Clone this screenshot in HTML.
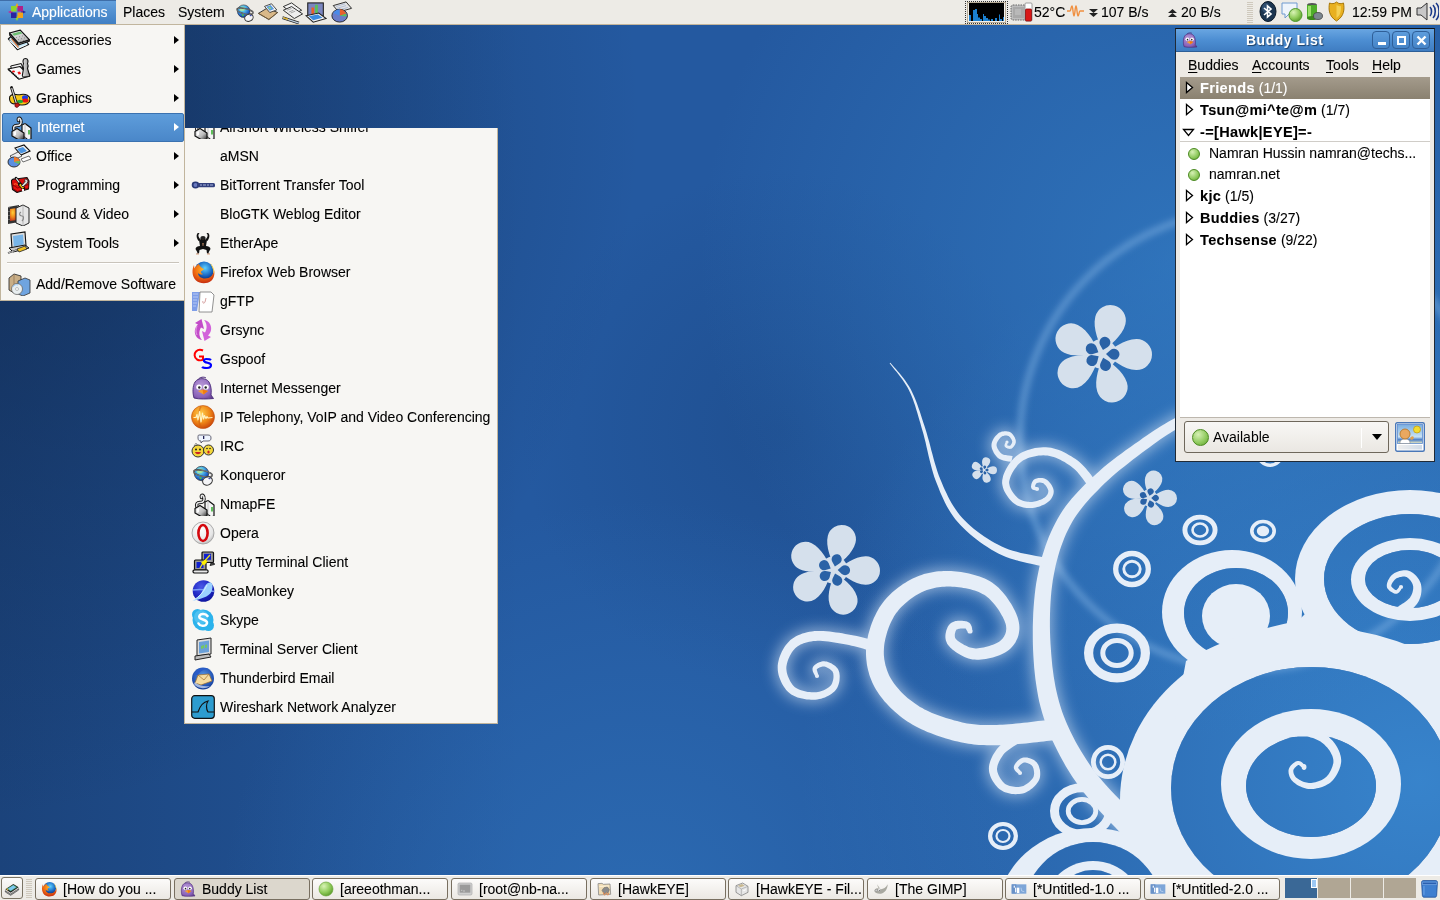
<!DOCTYPE html>
<html><head><meta charset="utf-8">
<style>
*{margin:0;padding:0;box-sizing:border-box}
html,body{width:1440px;height:900px;overflow:hidden}
body{position:relative;font-family:"Liberation Sans",sans-serif;font-size:14px;color:#000;background:#24589a}
.abs{position:absolute}
svg.ic{position:absolute}
#wall{position:absolute;left:0;top:0;width:1440px;height:900px}
#toppanel{position:absolute;left:0;top:0;width:1440px;height:25px;background:#edebe6;border-bottom:1px solid #c4b59b}
#botpanel{position:absolute;left:0;top:875px;width:1440px;height:25px;background:#edebe6;border-top:1px solid #fff}
.ptxt{position:absolute;top:3px;font-size:14px;line-height:18px;white-space:nowrap}
.menu{position:absolute;background:#f7f6f3;border:1px solid #c1b59d;overflow:hidden}
.mi{position:absolute;left:0;height:29px;width:100%;white-space:nowrap}
.mi .t{position:absolute;left:35px;top:5px;line-height:18px}
.mi .ic{left:6px;top:2px;width:24px;height:24px}
.arr{position:absolute;right:5px;top:10px;width:0;height:0;border-left:5px solid #000;border-top:4.5px solid transparent;border-bottom:4.5px solid transparent}
.sel{background:linear-gradient(#5e9ddb,#4a87c9);border:1px solid #3b72b0;border-radius:2px;color:#fff}
.sel .arr{border-left-color:#fff}
.tb{position:absolute;top:877px;height:22px;width:136px;border:1px solid #786f60;border-radius:3px;background:linear-gradient(#fcfbfa,#ebe8e3);white-space:nowrap;overflow:hidden}
.tb .t{position:absolute;left:27px;top:1px;line-height:18px}
.tb .ic{left:5px;top:2px;width:16px;height:16px}
.tb.act{background:#dcd7cd}
.bl-row{position:absolute;left:0;width:250px;height:22px;white-space:nowrap}
.bl-row .t{position:absolute;left:20px;top:2px;line-height:18px;font-size:14px}
.tbtn{width:18px;height:18px;border:1px solid #2f5f98;border-radius:4px;background:linear-gradient(#5e9ddc,#4584c8)}
.mb{top:27px;line-height:18px;white-space:nowrap}
.mb u{text-decoration:underline;text-underline-offset:2px}
.dot{position:absolute;left:8px;top:6px;width:12px;height:12px;border-radius:50%;background:radial-gradient(circle at 35% 30%,#d6f0b4,#8cc85a 60%,#5f9c2e);border:1px solid #4a8a20}
.bl-row b{font-size:14.5px;letter-spacing:0.35px}
.tb{top:2px}
.handle{background:repeating-linear-gradient(#edebe6 0 1px,#cfc9bd 1px 2px)}
.t,.ptxt,.mb,.gt{will-change:transform}
.mi .t,.ptxt,.mb,.tb .t,.bl-row .t{-webkit-text-stroke:0.1px currentColor}

</style></head><body>
<svg width="0" height="0" style="position:absolute">
<defs>
<linearGradient id="g-blue" x1="0" y1="0" x2="0" y2="1"><stop offset="0" stop-color="#7ec3f0"/><stop offset="1" stop-color="#1f6fb5"/></linearGradient>
<radialGradient id="g-ff" cx="0.4" cy="0.35" r="0.7"><stop offset="0" stop-color="#ffd23a"/><stop offset="0.5" stop-color="#f08a1c"/><stop offset="1" stop-color="#c4321a"/></radialGradient>
<radialGradient id="g-globe" cx="0.4" cy="0.35" r="0.7"><stop offset="0" stop-color="#9ad8ff"/><stop offset="0.6" stop-color="#2b6fc0"/><stop offset="1" stop-color="#10306a"/></radialGradient>
<radialGradient id="g-green" cx="0.35" cy="0.3" r="0.75"><stop offset="0" stop-color="#d9f3b5"/><stop offset="0.6" stop-color="#8fcb5a"/><stop offset="1" stop-color="#5a9a2a"/></radialGradient>
<linearGradient id="g-grey" x1="0" y1="0" x2="1" y2="1"><stop offset="0" stop-color="#fff"/><stop offset="1" stop-color="#a9a9a9"/></linearGradient>
<symbol id="i-plug" viewBox="0 0 24 24">
 <linearGradient id="gplug" x1="0" y1="0" x2="1" y2="1"><stop offset="0" stop-color="#fff"/><stop offset="0.6" stop-color="#bbb"/><stop offset="1" stop-color="#222"/></linearGradient>
 <path d="M6,15 C5,12 6,10.5 9,10.5 C12,10.5 13.5,9 13,6 C12.5,2.5 9.5,2.5 10.5,5.5" fill="none" stroke="#111" stroke-width="3.4" stroke-linecap="round"/>
 <path d="M6,15 C5,12 6,10.5 9,10.5 C12,10.5 13.5,9 13,6 C12.5,2.5 9.5,2.5 10.5,5.5" fill="none" stroke="#e8e8e8" stroke-width="1.6" stroke-linecap="round"/>
 <path d="M14,10 L17,8.5 L23,13 L23,24 L20,25 L14,20 Z" fill="#f4f4f4" stroke="#111" stroke-width="1.2" stroke-linejoin="round"/>
 <path d="M17,8.5 L17,24.5" stroke="#bbb" stroke-width="0.8"/>
 <rect x="20" y="15" width="2" height="4.5" fill="#5fbf5a"/>
 <path d="M4,16.5 L9,13.5 L16,18 L16,24 L11,25 L4,21 Z" fill="url(#gplug)" stroke="#111" stroke-width="1.2" stroke-linejoin="round"/>
 <path d="M6,17 L8,16 L8,20 L6,21Z" fill="#fff" opacity="0.9"/>
</symbol>
<symbol id="i-bt" viewBox="0 0 24 24">
 <ellipse cx="4.5" cy="12" rx="3.8" ry="3.4" fill="#2a3a78"/>
 <circle cx="4.5" cy="12" r="2" fill="#6a7ac0"/>
 <rect x="6" y="10" width="18" height="4.2" rx="1.5" fill="#33407e"/>
 <path d="M9,12h2M12,12h3M16,12h2M19,12h3" stroke="#a8b4dc" stroke-width="1"/>
</symbol>
<symbol id="i-ape" viewBox="0 0 24 24">
 <path d="M7.5,10 C6,8 5,5 6,3 C6.5,2 8,1.5 8.5,2.5 L7.5,3.5 C7,5 8,7 9.5,8.5 Z" fill="#111"/>
 <path d="M16.5,10 C18,8 19,5 18,3 C17.5,2 16,1.5 15.5,2.5 L16.5,3.5 C17,5 16,7 14.5,8.5 Z" fill="#111"/>
 <ellipse cx="12" cy="7.5" rx="2.6" ry="2.4" fill="#222"/>
 <path d="M11,8 C11.5,9 12.5,9 13,8" stroke="#a87a5a" stroke-width="0.9" fill="none"/>
 <path d="M8,9 C9,8 15,8 16,9 L15,15 C17,15 19.5,16 19.5,18 L17.5,21.5 L18.5,22.5 L16,22.5 L15.5,19 L12,18 L8.5,19 L8,22.5 L5.5,22.5 L6.5,21.5 L4.5,18 C4.5,16 7,15 9,15 Z" fill="#111"/>
 <path d="M11,12 L13,12 L12.5,15 L11.5,15Z" fill="#a87a5a" opacity="0.8"/>
 <path d="M5,23 L8,23 M16,23 L19,23" stroke="#d9a080" stroke-width="1"/>
</symbol>
<symbol id="i-ff" viewBox="0 0 24 24">
 <radialGradient id="gff1" cx="0.55" cy="0.35" r="0.6"><stop offset="0" stop-color="#5fd0ff"/><stop offset="0.6" stop-color="#1e6fc8"/><stop offset="1" stop-color="#0d2f80"/></radialGradient>
 <radialGradient id="gff2" cx="0.5" cy="0.3" r="0.8"><stop offset="0" stop-color="#ffb82a"/><stop offset="0.5" stop-color="#f06a10"/><stop offset="1" stop-color="#b81a10"/></radialGradient>
 <circle cx="13" cy="11" r="9.5" fill="url(#gff1)"/>
 <path d="M3,5 C1,9 0.5,16 5,20.5 C9,24 16,24 20,21 C23,18.5 24,14 23,10 C22.5,15 19,18.5 14,18.5 C10,18.5 7,16 7,13 C8.5,14.5 11,15 12,14 C10,13.5 9.5,12 10.5,11 C11.5,10 13,10 13,9 C11,8 8.5,6.5 8,4 C6,5 4.5,6.5 3.5,8.5 C3.2,7.5 3.2,6 3,5 Z" fill="url(#gff2)"/>
 <path d="M19,3 C22.5,6 24,11 23,14 C22.5,10 21,6 19,3Z" fill="#ffd23a"/>
</symbol>
<symbol id="i-gftp" viewBox="0 0 24 24">
 <path d="M1 3h8l-3 19h-5z" fill="#7f9ee8"/>
 <path d="M2 5h5M2 8h5M2 11h4M2 14h4M2 17h3" stroke="#c6d4f6" stroke-width="0.8"/>
 <path d="M9 3h11l3 3l-2 17h-13z" fill="#fff" stroke="#777" stroke-width="0.8"/>
 <path d="M15 9l-1 4c-1 2-3 1-2-1" fill="none" stroke="#c88" stroke-width="0.8"/>
</symbol>
<symbol id="i-grsync" viewBox="0 0 24 24">
 <path d="M10.5,1 L4,5 L7,6.5 C3.5,9.5 2.5,15 6,19.5 C7.5,21 9.5,22 11,22 C8,19 7.5,13.5 10,9.5 L13,11 Z" fill="#c34cc9"/>
 <path d="M13.5,23 L20,19 L17,17.5 C20.5,14.5 21.5,9 18,4.5 C16.5,3 14.5,2 13,2 C16,5 16.5,10.5 14,14.5 L11,13 Z" fill="#d262da"/>
 <path d="M6,8 C4.5,11 5,15 6,17" stroke="#e6a0ea" stroke-width="1.2" fill="none" opacity="0.8"/>
</symbol>
<symbol id="i-gspoof" viewBox="0 0 24 24">
 <path d="M12 3.5c-2-1-5-1-7 1c-2 2-2 6 1 8c2 1 5 1 6 0v-3h-4" fill="none" stroke="#f00" stroke-width="2"/>
 <path d="M20 13c-1-1-3-1-5-1c-2 0-3 2-1 3c2 1 6 1 6 3c0 2-2 3-4 3c-2 0-4 0-5-1" fill="none" stroke="#00f" stroke-width="2.2"/>
</symbol>
<symbol id="i-pidgin" viewBox="0 0 24 24">
 <radialGradient id="gpd" cx="0.4" cy="0.35" r="0.8"><stop offset="0" stop-color="#b89ad8"/><stop offset="0.7" stop-color="#8a62b8"/><stop offset="1" stop-color="#5c3a88"/></radialGradient>
 <path d="M3,22 C1.5,17 1.5,10 4,6 C7,1.5 15,1.5 18,6 C20.5,10 20.5,16 20,19 L22.5,22.5 C17,23 8,23.5 3,22 Z" fill="url(#gpd)" stroke="#4a2a78" stroke-width="0.9"/>
 <path d="M7,3.5 C9,1 13,0.5 15,2" stroke="#4a2a78" stroke-width="1" fill="none"/>
 <ellipse cx="8" cy="11" rx="2.8" ry="2.6" fill="#fff"/><ellipse cx="15" cy="11" rx="2.8" ry="2.6" fill="#fff"/>
 <circle cx="8.3" cy="11.5" r="1.2" fill="#222"/><circle cx="14.7" cy="11.5" r="1.2" fill="#222"/>
 <path d="M7,15 L11.5,13.5 L17,15 L12.5,18.5 Z" fill="#f6a030"/>
 <path d="M11.5,13.5 L17,15 L12.5,18.5Z" fill="#f27a10"/>
</symbol>
<symbol id="i-voip" viewBox="0 0 24 24">
 <radialGradient id="gvo" cx="0.4" cy="0.35" r="0.7"><stop offset="0" stop-color="#ffd050"/><stop offset="0.55" stop-color="#f08a18"/><stop offset="1" stop-color="#c8400a"/></radialGradient>
 <circle cx="12" cy="12" r="11.5" fill="url(#gvo)" stroke="#c05010" stroke-width="0.6"/>
 <path d="M10,1.5 C7,6 7,17 10,22.5" stroke="#d06010" stroke-width="1.5" fill="none" opacity="0.6"/>
 <path d="M2.5,12.5 L5,12.5 L6,9.5 L7,15 L8.5,6.5 L10,17 L11.5,8 L12.5,14 L13.5,10.5 L15,13.5 L16,11.5 L17,13 L21.5,12.5" fill="none" stroke="#fff2c0" stroke-width="1.2" stroke-linejoin="round"/>
</symbol>
<symbol id="i-irc" viewBox="0 0 24 24">
 <path d="M8 1h9c2 0 3 1 3 3s-1 3-3 3h-5l-2 2v-2c-2 0-3-1-3-3s0-3 1-3z" fill="#eef4ff" stroke="#445" stroke-width="0.8"/>
 <rect x="12" y="2" width="1.3" height="3" fill="#225"/>
 <path d="M5 9l2 3h-4z" fill="#eee" stroke="#555" stroke-width="0.5"/>
 <circle cx="7" cy="17" r="6" fill="#f3d73a" stroke="#333" stroke-width="1"/>
 <circle cx="17.5" cy="16" r="5" fill="#f3d73a" stroke="#333" stroke-width="1"/>
 <circle cx="5" cy="15.5" r="1" fill="#222"/><circle cx="9" cy="15.5" r="1" fill="#222"/>
 <path d="M4 18c1 3 5 3 6 0z" fill="#c22"/>
 <circle cx="16" cy="14.5" r="0.8" fill="#222"/><circle cx="19" cy="14.5" r="0.8" fill="#222"/>
 <ellipse cx="17.5" cy="18" rx="1.2" ry="1.5" fill="#c22"/>
</symbol>
<symbol id="i-konq" viewBox="0 0 24 24">
 <radialGradient id="gkq" cx="0.4" cy="0.3" r="0.75"><stop offset="0" stop-color="#b8f0b0"/><stop offset="0.35" stop-color="#50b8e8"/><stop offset="0.75" stop-color="#1e5ec8"/><stop offset="1" stop-color="#0a2a80"/></radialGradient>
 <circle cx="10.5" cy="10.5" r="7.2" fill="url(#gkq)" stroke="#222" stroke-width="0.6"/>
 <path d="M6,8 C7.5,6 11,5.5 13,7.5 C12,10 9,10.5 6.5,10 Z" fill="#a8e6a0" opacity="0.9"/>
 <path d="M8,14.5 C9,13.5 10.5,14 11,15.5 L9.5,16.5Z" fill="#4ab850"/>
 <ellipse cx="12" cy="10.5" rx="9.5" ry="3" transform="rotate(12 12 10.5)" fill="none" stroke="#333" stroke-width="1.4"/>
 <ellipse cx="12" cy="10.5" rx="9.5" ry="3" transform="rotate(12 12 10.5)" fill="none" stroke="#bbb" stroke-width="0.5"/>
 <ellipse cx="16.5" cy="18" rx="5" ry="4" transform="rotate(-25 16.5 18)" fill="#f4f4f6" stroke="#333" stroke-width="1.1"/>
 <ellipse cx="18.5" cy="15.5" rx="1.2" ry="0.8" fill="#4050b0"/>
</symbol>
<symbol id="i-opera" viewBox="0 0 24 24">
 <radialGradient id="gop" cx="0.4" cy="0.3" r="0.8"><stop offset="0" stop-color="#fff"/><stop offset="0.7" stop-color="#e6e6e6"/><stop offset="1" stop-color="#a8a8a8"/></radialGradient>
 <circle cx="12" cy="12" r="11" fill="url(#gop)" stroke="#9a9a9a" stroke-width="0.8"/>
 <ellipse cx="12" cy="12" rx="4.6" ry="8" fill="none" stroke="#d4080e" stroke-width="2.6"/>
</symbol>
<symbol id="i-putty" viewBox="0 0 24 24">
 <rect x="11" y="2" width="11.5" height="10.5" rx="1" fill="#9a9a9a" stroke="#111" stroke-width="1.2"/>
 <rect x="13" y="3.8" width="7" height="6" fill="#1020d0"/>
 <path d="M20,13 L23,13 L23.5,14.5 L19,15.5Z" fill="#555" stroke="#111" stroke-width="0.8"/>
 <rect x="3.5" y="10" width="11.5" height="10" rx="1" fill="#9a9a9a" stroke="#111" stroke-width="1.2"/>
 <rect x="5.5" y="12" width="7" height="6" fill="#1020d0"/>
 <path d="M2,21.5 C2,20 3,19.8 4,19.8 L16,19.8 C17.5,20 17.5,22.5 16,23 L4,23 C3,23 2,22.8 2,21.5Z" fill="#e8e8e8" stroke="#111" stroke-width="1.2"/>
 <path d="M19,5 L15,9.5 L12,13 L9,18" stroke="#e8e020" stroke-width="1.3"/>
 <path d="M10,12.5 L14.5,9.5 L16.5,11.5 L13,15.5 Z" fill="#fff000"/>
</symbol>
<symbol id="i-seamonkey" viewBox="0 0 24 24">
 <radialGradient id="gsm" cx="0.4" cy="0.3" r="0.8"><stop offset="0" stop-color="#4a58e8"/><stop offset="0.6" stop-color="#1c24c0"/><stop offset="1" stop-color="#0a1090"/></radialGradient>
 <circle cx="12.5" cy="12" r="10.8" fill="url(#gsm)"/>
 <path d="M2,11 C8,10 16,10.5 23,12.5" stroke="#8ab0ff" stroke-width="1.6" fill="none" opacity="0.8"/>
 <path d="M1.5,22 C6,19 10,16 12,11 C14,6 16.5,3 19.5,3.5 C22,4.5 22,9 20.5,12.5 C18,18 9,20 1.5,22Z" fill="#9ad0ff"/>
 <path d="M2,21.5 C8,18 13,13 16,6" stroke="#dff0ff" stroke-width="0.9" fill="none"/>
</symbol>
<symbol id="i-skype" viewBox="0 0 24 24">
 <circle cx="12" cy="12" r="10.5" fill="#2cb3ec"/>
 <circle cx="6.5" cy="6.5" r="5.5" fill="#2cb3ec"/><circle cx="17.5" cy="17.5" r="5.5" fill="#2cb3ec"/>
 <circle cx="10" cy="9" r="7" fill="#6fd0f6" opacity="0.5"/>
 <path d="M16.5,8 C15.5,6.5 13.5,5.8 11.5,6 C9,6.3 7.8,8 8.5,9.6 C9.5,11.6 15.5,11.5 16,14.2 C16.4,16.6 14,18 11.5,17.8 C9.5,17.7 8.2,16.8 7.5,15.5" fill="none" stroke="#fff" stroke-width="2.6" stroke-linecap="round"/>
</symbol>
<symbol id="i-tsc" viewBox="0 0 24 24">
 <path d="M6 3l14-2v16l-14 2z" fill="#ddd" stroke="#222" stroke-width="1"/>
 <path d="M8 5l10-1.5v11.5l-10 1.5z" fill="#6aa0d8"/>
 <path d="M10 9l3-1v3l-3 1zM14 8l2-.5v3l-2 .5z" fill="#7c5" opacity="0.9"/>
 <path d="M4 19l14-2l2 3l-16 3z" fill="#bbb" stroke="#222" stroke-width="1"/>
</symbol>
<symbol id="i-tbird" viewBox="0 0 24 24">
 <radialGradient id="gtb" cx="0.5" cy="0.4" r="0.7"><stop offset="0" stop-color="#5a9ae8"/><stop offset="0.7" stop-color="#1f4fb0"/><stop offset="1" stop-color="#0c2670"/></radialGradient>
 <circle cx="12" cy="12.5" r="11" fill="url(#gtb)"/>
 <path d="M4,17 L7,9 L18,8 L21,15 L10,19 Z" fill="#f6dca0" stroke="#9a6a2a" stroke-width="0.7"/>
 <path d="M7,9 L13,14 L18,8" fill="none" stroke="#a87a3a" stroke-width="0.8"/>
 <path d="M3,9 C5,3 12,0.5 18,3 C13,3 9,5 7,9 Z" fill="#2a5cc8"/>
 <path d="M3,18 C6,22 13,24 19,20 C14,21 8,20 4,16 Z" fill="#d8e4f8" opacity="0.7"/>
</symbol>
<symbol id="i-wshark" viewBox="0 0 24 24">
 <rect x="0.7" y="0.7" width="22.6" height="22.6" rx="3" fill="#2d9ccf" stroke="#111" stroke-width="1.2"/>
 <path d="M1 17h6c2-6 5-10 10-11c-2 3-2 8 0 11h6" fill="none" stroke="#111" stroke-width="1.2"/>
</symbol>
</defs></svg>
<svg width="0" height="0" style="position:absolute">
<defs>
<symbol id="i-acc" viewBox="0 0 24 24">
 <linearGradient id="gcalc" x1="0" y1="0" x2="0.6" y2="1"><stop offset="0" stop-color="#f4f4f4"/><stop offset="1" stop-color="#b4b4b4"/></linearGradient>
 <path d="M1.3,11 L10.3,21.7 L21.7,16.5 L19,13 L4,8.5 Z" fill="#c4e8f8" stroke="#111" stroke-width="1.1" stroke-linejoin="round"/>
 <path d="M2.5,12.5 L10.5,20.5 L20,16.5" fill="none" stroke="#fff" stroke-width="0.9"/>
 <path d="M4.5,10.5 L11.5,19.5" stroke="#e0804a" stroke-width="1.3"/>
 <path d="M2.5,5 L2.8,7.5 L11.3,17 L22.3,13.3 L22.3,11.7 L11.3,15.2 Z" fill="#9a9a9a" stroke="#111" stroke-width="1.1" stroke-linejoin="round"/>
 <path d="M2.5,5 L13.3,2.2 L22.3,11.7 L11.3,15.2 Z" fill="url(#gcalc)" stroke="#111" stroke-width="1.2" stroke-linejoin="round"/>
 <path d="M5,5.7 L13.5,3.6 L15.2,5.5 L7,7.8 Z" fill="#6cbf72"/>
 <path d="M9,9.5h.8M12,8.7h.8M15,7.9h.8M11,11.5h.8M14,10.7h.8M17,9.9h.8M13,13.3h.8M16,12.5h.8" stroke="#777" stroke-width="0.9"/>
</symbol>
<symbol id="i-games" viewBox="0 0 24 24">
 <linearGradient id="gpawn" x1="0" y1="0" x2="1" y2="0"><stop offset="0" stop-color="#e8e8e8"/><stop offset="1" stop-color="#8a8a8a"/></linearGradient>
 <path d="M3.7,9 L14.3,6.5 L16,12 L5,14.5 Z" fill="#f2f2f2" stroke="#111" stroke-width="1"/>
 <path d="M1,12 L12,22.3 L22.7,19 L13,9.5 Z" fill="#f8f8f8" stroke="#111" stroke-width="1.1" stroke-linejoin="round"/>
 <path d="M1.5,12.5 L12,22" stroke="#111" stroke-width="1.6" stroke-dasharray="1 1"/>
 <ellipse cx="6.5" cy="14.5" rx="1.5" ry="1.1" fill="#f01010"/>
 <path d="M10.5,15 L13,14.5 L14,17 L11.5,17.5Z" fill="#f01010"/>
 <path d="M18.5,1.5 C16,1.5 15.5,4.5 16.5,6.5 C15.5,8 16,10 16.5,11.5 L15.5,17.5 C15,18.5 15.5,20 17,20 L22,19.5 C23,19 23,17.5 22,16.5 L20.5,11.5 C21,10 21.5,8 20.5,6.5 C21.5,4.5 21,1.5 18.5,1.5 Z" fill="url(#gpawn)" stroke="#111" stroke-width="1.1"/>
</symbol>
<symbol id="i-graphics" viewBox="0 0 24 24">
 <path d="M2.5,13 C2,9.5 5,8 9,8.5 C11,8.8 12,9 14,8.5 C19,7.5 23,10 23,13.5 C23,17 19,19.5 14,19 C11,18.8 10,17.5 7.5,17.8 C4.5,18.2 2.8,16 2.5,13 Z" fill="#f6c818" stroke="#111" stroke-width="1.1"/>
 <path d="M4,11 C5,10 6,10 7,11" stroke="#fff4a0" stroke-width="1" fill="none"/>
 <ellipse cx="18" cy="11.5" rx="3" ry="2.2" fill="#1a3ae8"/>
 <ellipse cx="18.3" cy="14.5" rx="3.3" ry="2" fill="#e81414"/>
 <ellipse cx="13" cy="15.5" rx="3" ry="1.7" fill="#1ea838"/>
 <path d="M4.5,1.5 L9.5,18" stroke="#111" stroke-width="2.8" stroke-linecap="round"/>
 <path d="M4.7,2 L9.4,17.5" stroke="#d8d8d8" stroke-width="1.1"/>
 <path d="M8,17.5 L11.5,17 L12.5,19.5 L10,21.5 L8,20.5 Z" fill="#c81818" stroke="#5a0a0a" stroke-width="0.8"/>
</symbol>
<symbol id="i-office" viewBox="0 0 24 24">
 <path d="M8 4l9-3l6 6l-9 4z" fill="#f4f4f4" stroke="#111" stroke-width="1.1"/>
 <path d="M10 5l6-2l4 4l-6 2.5z" fill="#4b94e0"/>
 <path d="M3 12l8-4l4 4l-8 4z" fill="#eee" stroke="#333" stroke-width="0.8"/>
 <path d="M14 15l8-3l2 3l-8 3z" fill="#fff" stroke="#333" stroke-width="0.7"/>
 <ellipse cx="7" cy="18" rx="6" ry="5" fill="#5b8ee0" stroke="#222" stroke-width="0.9"/>
 <path d="M7 18v-5c3 0 5 2 6 4z" fill="#f07a2a"/>
 <path d="M7 18l6-1c0 1 0 2-1 3z" fill="#6ac050"/>
</symbol>
<symbol id="i-prog" viewBox="0 0 24 24">
 <path d="M4.5,9 C4,7 6,5.5 8.5,6 L20,4.5 L22,8 L21.5,16 L10,19.5 L5.5,16.5 Z" fill="#d80c0c" stroke="#111" stroke-width="1.1" stroke-linejoin="round"/>
 <path d="M6,15.5 L10.5,18.5 L21.5,15 L21.5,11.5 L10.5,15 L6,12 Z" fill="#e81010" stroke="#5a0000" stroke-width="0.6"/>
 <path d="M7,11.5 C8,10.5 10,11 11,12" stroke="#ff6a2a" stroke-width="1.2" fill="none"/>
 <path d="M9,5 L13.5,11" stroke="#111" stroke-width="2.6" stroke-linecap="round"/>
 <path d="M9.2,5.3 L13.3,10.8" stroke="#e8e8e8" stroke-width="1.1"/>
 <path d="M12.5,11 L16.5,15.5" stroke="#111" stroke-width="3.4" stroke-linecap="round"/>
 <path d="M12.8,11.3 L16.2,15.2" stroke="#f0c010" stroke-width="2"/>
 <path d="M18.5,6 C20.5,6 21.5,8 20.5,10 L16,14 L14.5,12.5 L18,8.5 C17.5,7.5 17.5,6.5 18.5,6 Z" fill="#d8d8d8" stroke="#222" stroke-width="0.9"/>
 <rect x="15" y="16" width="2" height="2.5" fill="#f4f4f4"/>
</symbol>
<symbol id="i-sound" viewBox="0 0 24 24">
 <path d="M1 5l11-2v17l-11 2z" fill="#333"/>
 <path d="M3 7l7-1v12l-7 1z" fill="url(#g-ff)"/>
 <path d="M2 5.5v.5M2 9v.5M2 13v.5M2 17v.5M11 4v.5M11 8v.5M11 12v.5M11 16v.5" stroke="#fff" stroke-width="1"/>
 <path d="M9 6l7-3l6 3v15l-6 3l-7-3z" fill="#e6e6e6" stroke="#222" stroke-width="1"/>
 <path d="M16 3v21" stroke="#999" stroke-width="0.6"/>
 <path d="M14 10c-2 1-2 4 1 4c2 0 2 3 0 5" fill="none" stroke="#888" stroke-width="1.2"/>
</symbol>
<symbol id="i-systools" viewBox="0 0 24 24">
 <path d="M4 3l14-2l1 14l-14 3z" fill="#dcdcdc" stroke="#111" stroke-width="1.1"/>
 <path d="M6 5l10-1.5l.8 10l-10 2z" fill="#78b5e8"/>
 <path d="M2 17l16-3l4 3l-16 4z" fill="#c8c8c8" stroke="#111" stroke-width="1"/>
 <path d="M1 22l9-3" stroke="#222" stroke-width="1.8"/>
 <path d="M1 22l9-3" stroke="#ddd" stroke-width="0.8"/>
 <path d="M10 18l8-3l2 3l-8 3z" fill="#f0c020" stroke="#222" stroke-width="0.8"/>
</symbol>
<symbol id="i-addrem" viewBox="0 0 24 24">
 <path d="M2 6l5-4l7 2v14l-7 3l-5-3z" fill="#c9ae86" stroke="#333" stroke-width="0.9"/>
 <path d="M7 2v19" stroke="#8a7050" stroke-width="0.7"/>
 <path d="M11 9l7-3l5 2v13l-7 3l-5-2z" fill="#6fa4e0" stroke="#333" stroke-width="0.8"/>
 <circle cx="10" cy="17" r="5.5" fill="#e8eef0" stroke="#666" stroke-width="0.8"/>
 <circle cx="10" cy="17" r="1.5" fill="#fff" stroke="#888" stroke-width="0.5"/>
 <path d="M6 15c1-2 3-3 5-2" stroke="#9cf" stroke-width="1" fill="none"/>
</symbol>
<symbol id="i-fedora" viewBox="0 0 20 20">
 <path d="M10 1l2 4l-2 1l-2-1z" fill="#f6a21a"/>
 <path d="M10 19l2-4l-2-1l-2 1z" fill="#8ed62a"/>
 <path d="M1 10l4-2l1 2l-1 2z" fill="#c22a9a"/>
 <path d="M19 10l-4-2l-1 2l1 2z" fill="#2b2aa0"/>
 <rect x="4" y="4" width="5.5" height="5.5" fill="#8ed62a"/>
 <rect x="10.5" y="4" width="5.5" height="5.5" fill="#b0208a"/>
 <rect x="4" y="10.5" width="5.5" height="5.5" fill="#2a24a0"/>
 <rect x="10.5" y="10.5" width="5.5" height="5.5" fill="#f6a21a"/>
</symbol>
</defs></svg>
<svg width="0" height="0" style="position:absolute">
<defs>
<symbol id="i-desk" viewBox="0 0 24 24">
 <path d="M2 14l12-8l8 5l-12 8z" fill="#222"/>
 <path d="M4 13l10-6l6 4l-10 6z" fill="#4b9a6a"/>
 <path d="M6 13l8-5l4 3l-8 5z" fill="#7cc8f0"/>
 <path d="M2 16l8 5l12-8v2l-12 8l-8-5z" fill="#aaa" stroke="#222" stroke-width="0.8"/>
 <path d="M3 12l4 2l-2 2z" fill="#d4b040"/>
</symbol>
<symbol id="i-grn" viewBox="0 0 24 24">
 <circle cx="12" cy="12" r="10.5" fill="url(#g-green)" stroke="#6aa53a" stroke-width="1"/>
</symbol>
<symbol id="i-term" viewBox="0 0 24 24">
 <rect x="1.5" y="3" width="21" height="18" rx="2" fill="#cfcfcf" stroke="#aaa" stroke-width="1"/>
 <rect x="4" y="5.5" width="16" height="12" fill="#9a9a9a"/>
 <path d="M6 14h2M9 15h3" stroke="#ddd" stroke-width="1"/>
</symbol>
<symbol id="i-hawk" viewBox="0 0 24 24">
 <path d="M3,4 L9,3.5 L11,5 L21,4.5 L22,20 L4,21 Z" fill="#f0dcb4" stroke="#888" stroke-width="1.2" stroke-linejoin="round"/>
 <path d="M5,8 L20,7.5" stroke="#fff4dc" stroke-width="1.5"/>
 <path d="M12,10 L17,9 L20,13 L18,18 L12,19 L9,14 Z" fill="#8a8a8a" stroke="#666" stroke-width="0.8"/>
 <path d="M11,17 C11,22 14,22 14,18 M16,17 C16,22 19,22 19,18" stroke="#e0905a" stroke-width="1.6" fill="none"/>
</symbol>
<symbol id="i-fm" viewBox="0 0 24 24">
 <path d="M3,7 L13,3 L21,8 L21,17 L11,22 L3,17 Z" fill="#e6e6e6" stroke="#7a7a7a" stroke-width="1.1" stroke-linejoin="round"/>
 <path d="M3,7 L11,12 L21,8 M11,12 L11,22" fill="none" stroke="#999" stroke-width="0.9"/>
 <path d="M6,7 L12,4.5 L16,7 L10,9.5 Z" fill="#c8b890"/>
 <rect x="14" y="13" width="4" height="1.5" fill="#fff" transform="rotate(-25 16 14)"/>
</symbol>
<symbol id="i-gimp" viewBox="0 0 24 24">
 <path d="M2,15 C3,11 7,10 10,12 C14,13 19,11 22,5 C22,12 18,18 12,19 C7,19.5 3,18 2,15 Z" fill="#a8a8a0"/>
 <path d="M8,11 L6,5 L10,10 Z" fill="#b8b8b0"/>
 <circle cx="5" cy="14" r="1.8" fill="#ccc" stroke="#777" stroke-width="0.5"/>
 <circle cx="9.5" cy="13.5" r="2" fill="#fff" stroke="#888" stroke-width="0.5"/>
 <circle cx="10" cy="13.8" r="0.8" fill="#333"/>
</symbol>
<symbol id="i-img" viewBox="0 0 24 24">
 <rect x="1" y="5" width="22" height="14" fill="#7ea6d8"/>
 <rect x="1" y="5" width="7" height="14" fill="#6a92c8"/>
 <rect x="4" y="7" width="2" height="3" fill="#e8eef8"/>
 <rect x="6" y="10" width="2" height="7" fill="#f0f4fa"/>
 <rect x="9" y="10" width="3.5" height="8" fill="#fff"/>
 <path d="M15,10 L16,15 L20,16" stroke="#c8dcf4" stroke-width="1" fill="none"/>
</symbol>
<symbol id="i-trash" viewBox="0 0 24 24">
 <path d="M2 4c0-1 1-2 2-2h16c1 0 2 1 2 2l-1 17c0 1-1 2-2 2h-14c-1 0-2-1-2-2z" fill="#3f7fd0" stroke="#1f4f98" stroke-width="1"/>
 <path d="M3 4h18v3h-18z" fill="#2a5fb0" stroke="#8ab8f0" stroke-width="0.7"/>
 <path d="M5 9v11" stroke="#7ab0f0" stroke-width="1"/>
</symbol>
</defs></svg>
<svg width="0" height="0" style="position:absolute">
<defs>
<symbol id="i-mail" viewBox="0 0 24 24">
 <path d="M1 13l10-6l12 5l-10 8z" fill="#d9b888" stroke="#222" stroke-width="1"/>
 <path d="M8 5l8-3l6 7l-8 3z" fill="#f5f5f5" stroke="#222" stroke-width="0.9"/>
 <path d="M10 5.5l5-2l4 4.5l-5 2z" fill="#5a9ae0"/>
 <path d="M12 6l2-.8l2 2.2l-2 .8z" fill="#8fd080"/>
 <path d="M1 13l12 7l10-8" fill="none" stroke="#8a6a3a" stroke-width="0.8"/>
</symbol>
<symbol id="i-writer" viewBox="0 0 24 24">
 <path d="M2 5l9-4l11 8l-9 4z" fill="#f4f4f4" stroke="#222" stroke-width="1"/>
 <path d="M2 9l9-4l12 8l-9 5z" fill="#eee" stroke="#222" stroke-width="1"/>
 <path d="M6 9l5-2M8 11l5-2M10 12l5-2" stroke="#999" stroke-width="0.9"/>
 <path d="M1 17l18 6" stroke="#222" stroke-width="3"/>
 <path d="M1 17l18 6" stroke="#bcd" stroke-width="1.5"/>
 <path d="M2 17l5 2" stroke="#e0b020" stroke-width="1.5"/>
</symbol>
<symbol id="i-impress" viewBox="0 0 24 24">
 <rect x="3" y="1" width="17" height="14" fill="#7b86c0" stroke="#222" stroke-width="1.2"/>
 <rect x="7" y="6" width="3" height="7" fill="#e8602a"/>
 <rect x="11" y="3" width="3" height="10" fill="#5ac05a"/>
 <path d="M1 15l14-3l8 6l-14 4z" fill="#f2f2f2" stroke="#222" stroke-width="1.1"/>
 <path d="M4 15.5l10-2l5 3.8l-10 2.6z" fill="#3a8ae0"/>
</symbol>
<symbol id="i-calc" viewBox="0 0 24 24">
 <path d="M3 5l14-4l6 7l-14 4z" fill="#e4e4e4" stroke="#222" stroke-width="1"/>
 <path d="M6 6l10-3M7 8l10-3M9 10l10-3" stroke="#a0b0d0" stroke-width="0.8"/>
 <ellipse cx="10" cy="16" rx="8.5" ry="7" fill="#6a7cc8" stroke="#222" stroke-width="1"/>
 <path d="M10 16v-7c3 0 6 2 7 5z" fill="#e8602a"/>
 <path d="M10 16l7-2c.5 1 .5 2 0 3z" fill="#5ac05a"/>
 <path d="M3 13c2-3 5-4 7-4v7z" fill="#4a8ae8"/>
</symbol>
</defs></svg>

<svg id="wall" width="1440" height="900" viewBox="0 0 1440 900">
<defs>
<linearGradient id="wbg" x1="0" y1="0" x2="1" y2="0.6">
<stop offset="0" stop-color="#17335f"/><stop offset="0.45" stop-color="#22528f"/><stop offset="1" stop-color="#2c6cb2"/></linearGradient>
<radialGradient id="wlite" cx="1420" cy="780" r="620" gradientUnits="userSpaceOnUse"><stop offset="0" stop-color="#3b8bd3" stop-opacity="0.85"/><stop offset="1" stop-color="#3b8bd3" stop-opacity="0"/></radialGradient>
<radialGradient id="wdark" cx="-60" cy="120" r="700" gradientUnits="userSpaceOnUse"><stop offset="0" stop-color="#10284e" stop-opacity="0.8"/><stop offset="0.5" stop-color="#10284e" stop-opacity="0.35"/><stop offset="1" stop-color="#10284e" stop-opacity="0"/></radialGradient><linearGradient id="wleft" x1="0" y1="0" x2="520" y2="0" gradientUnits="userSpaceOnUse"><stop offset="0" stop-color="#10284e" stop-opacity="0.45"/><stop offset="1" stop-color="#10284e" stop-opacity="0"/></linearGradient>
<radialGradient id="wlite2" cx="1180" cy="260" r="480" gradientUnits="userSpaceOnUse"><stop offset="0" stop-color="#3684cc" stop-opacity="0.6"/><stop offset="1" stop-color="#3684cc" stop-opacity="0"/></radialGradient>
<radialGradient id="wblob" cx="780" cy="430" r="260" gradientUnits="userSpaceOnUse"><stop offset="0" stop-color="#1a4580" stop-opacity="0.45"/><stop offset="1" stop-color="#1a4580" stop-opacity="0"/></radialGradient>
<radialGradient id="wlite3" cx="640" cy="920" r="420" gradientUnits="userSpaceOnUse"><stop offset="0" stop-color="#3278c0" stop-opacity="0.55"/><stop offset="1" stop-color="#3278c0" stop-opacity="0"/></radialGradient>
<filter id="glow" x="-20%" y="-20%" width="140%" height="140%"><feGaussianBlur stdDeviation="7"/></filter>
<filter id="soft2" x="-20%" y="-20%" width="140%" height="140%"><feGaussianBlur stdDeviation="3"/></filter>
<filter id="soft" x="-20%" y="-20%" width="140%" height="140%"><feGaussianBlur stdDeviation="7"/></filter>
</defs>
<g id="bgg">
<rect width="1440" height="900" fill="#2459a0"/>
<rect width="1440" height="900" fill="url(#wleft)"/>
<rect width="1440" height="900" fill="url(#wdark)"/>
<rect width="1440" height="900" fill="url(#wblob)"/>
<rect width="1440" height="900" fill="url(#wlite)"/>
<rect width="1440" height="900" fill="url(#wlite2)"/>
<rect width="1440" height="900" fill="url(#wlite3)"/>
<circle cx="1250" cy="440" r="230" fill="none" stroke="#8fbce8" stroke-opacity="0.45" stroke-width="7" filter="url(#soft2)"/>
</g>
<g fill="#dbe8f8" opacity="0.55" filter="url(#glow)" stroke="#dbe8f8" stroke-width="6"><path d="M1182.4,413.7 L1180.8,414.7 L1178.8,415.8 L1176.5,417.2 L1173.9,418.7 L1171.0,420.3 L1167.9,422.1 L1164.7,424.0 L1161.2,426.1 L1157.7,428.3 L1154.1,430.6 L1150.4,433.0 L1146.8,435.5 L1143.0,438.1 L1139.1,440.9 L1134.9,443.8 L1130.5,446.9 L1126.0,450.1 L1121.5,453.4 L1116.9,456.8 L1112.4,460.3 L1107.9,463.8 L1103.6,467.3 L1099.5,470.9 L1095.6,474.4 L1092.0,477.8 L1088.4,481.1 L1084.9,484.5 L1081.5,487.9 L1078.2,491.4 L1075.0,494.9 L1071.8,498.6 L1068.8,502.3 L1065.8,506.1 L1063.0,510.1 L1060.3,514.3 L1057.8,518.5 L1055.4,523.0 L1053.1,527.4 L1051.0,532.0 L1048.9,536.7 L1047.1,541.5 L1045.3,546.4 L1043.7,551.4 L1042.1,556.4 L1040.7,561.6 L1039.4,566.9 L1038.3,572.2 L1037.2,577.7 L1036.2,583.3 L1035.4,589.1 L1034.7,595.1 L1034.1,601.2 L1033.6,607.4 L1033.2,613.7 L1033.0,620.0 L1032.8,626.2 L1032.8,632.4 L1032.8,638.6 L1032.9,644.6 L1033.1,650.5 L1033.4,656.3 L1033.8,662.0 L1034.2,667.7 L1034.8,673.4 L1035.4,679.0 L1036.2,684.6 L1037.1,690.3 L1038.1,695.9 L1039.2,701.4 L1040.6,707.0 L1042.1,712.6 L1043.8,718.1 L1045.6,723.6 L1047.7,729.1 L1049.8,734.5 L1052.2,739.9 L1054.7,745.3 L1057.3,750.6 L1060.0,755.8 L1062.9,761.0 L1065.8,766.2 L1068.9,771.2 L1072.0,776.2 L1075.3,781.1 L1078.8,786.1 L1082.6,791.1 L1086.6,796.1 L1090.7,801.0 L1095.0,805.8 L1099.2,810.5 L1103.4,815.0 L1107.5,819.4 L1111.5,823.5 L1115.2,827.3 L1118.7,830.9 L1121.8,834.2 L1124.9,837.3 L1127.9,840.2 L1130.8,842.8 L1133.5,845.3 L1136.1,847.5 L1138.5,849.5 L1140.8,851.3 L1142.8,852.8 L1144.6,854.2 L1146.1,855.4 L1147.4,856.4 L1148.4,857.3 L1163.6,838.7 L1162.2,837.6 L1160.7,836.4 L1159.0,835.2 L1157.2,833.9 L1155.3,832.5 L1153.2,830.9 L1151.0,829.2 L1148.7,827.3 L1146.3,825.3 L1143.7,823.0 L1141.0,820.6 L1138.2,817.8 L1135.0,814.7 L1131.4,811.2 L1127.6,807.5 L1123.7,803.6 L1119.6,799.5 L1115.4,795.3 L1111.3,790.9 L1107.2,786.5 L1103.2,782.0 L1099.5,777.6 L1095.9,773.2 L1092.7,768.9 L1089.6,764.5 L1086.6,759.9 L1083.6,755.3 L1080.8,750.7 L1078.0,745.9 L1075.3,741.2 L1072.8,736.3 L1070.4,731.5 L1068.1,726.6 L1066.0,721.7 L1064.0,716.8 L1062.2,711.9 L1060.6,707.0 L1059.1,702.0 L1057.8,697.0 L1056.6,692.0 L1055.5,686.9 L1054.6,681.7 L1053.7,676.5 L1053.0,671.2 L1052.3,665.9 L1051.8,660.5 L1051.3,655.0 L1050.9,649.5 L1050.5,643.9 L1050.2,638.1 L1050.0,632.2 L1049.9,626.3 L1049.9,620.3 L1050.0,614.3 L1050.2,608.4 L1050.5,602.5 L1050.9,596.7 L1051.4,591.0 L1052.1,585.6 L1052.8,580.3 L1053.7,575.2 L1054.7,570.2 L1055.7,565.3 L1056.9,560.5 L1058.2,555.7 L1059.6,551.1 L1061.1,546.6 L1062.7,542.2 L1064.4,537.8 L1066.2,533.6 L1068.2,529.5 L1070.2,525.5 L1072.4,521.6 L1074.7,517.8 L1077.1,514.2 L1079.7,510.7 L1082.4,507.2 L1085.2,503.8 L1088.1,500.4 L1091.1,497.1 L1094.3,493.8 L1097.6,490.4 L1100.9,487.0 L1104.4,483.6 L1108.0,480.3 L1111.8,476.8 L1115.8,473.3 L1120.0,469.8 L1124.3,466.4 L1128.7,462.9 L1133.0,459.6 L1137.4,456.3 L1141.6,453.1 L1145.7,450.1 L1149.6,447.2 L1153.2,444.5 L1156.7,442.0 L1160.1,439.6 L1163.5,437.3 L1166.9,435.1 L1170.2,433.0 L1173.3,431.0 L1176.3,429.2 L1179.1,427.5 L1181.6,425.9 L1183.9,424.5 L1186.0,423.3 L1187.6,422.3Z M1143.4,848.0 a12.6,12.6 0 1,0 25.2,0 a12.6,12.6 0 1,0 -25.2,0Z"/><path d="M1050.9,719.6 L1049.0,719.8 L1046.7,720.0 L1044.1,720.4 L1041.2,720.7 L1038.0,721.1 L1034.6,721.5 L1031.0,722.0 L1027.4,722.4 L1023.6,722.8 L1019.9,723.2 L1016.2,723.6 L1012.5,724.0 L1009.0,724.3 L1005.7,724.5 L1002.6,724.7 L999.7,724.8 L997.0,724.9 L994.3,725.0 L991.8,725.0 L989.3,725.1 L986.9,725.1 L984.6,725.0 L982.4,725.0 L980.2,724.9 L978.0,724.7 L975.8,724.6 L973.7,724.3 L971.5,724.1 L969.3,723.7 L967.0,723.4 L964.7,722.9 L962.2,722.4 L959.7,721.8 L957.0,721.1 L954.3,720.4 L951.5,719.6 L948.7,718.8 L945.9,717.9 L943.1,717.0 L940.2,716.1 L937.4,715.0 L934.7,714.0 L932.0,712.9 L929.4,711.8 L926.9,710.6 L924.5,709.4 L922.2,708.1 L920.0,706.9 L917.9,705.5 L915.7,704.1 L913.6,702.6 L911.6,701.1 L909.5,699.5 L907.5,697.9 L905.6,696.2 L903.7,694.5 L901.9,692.7 L900.2,690.9 L898.6,689.1 L897.0,687.3 L895.6,685.5 L894.2,683.8 L893.0,682.0 L891.9,680.2 L890.8,678.5 L889.8,676.7 L888.9,674.9 L888.1,673.0 L887.3,671.1 L886.7,669.2 L886.1,667.3 L885.5,665.4 L885.1,663.4 L884.7,661.5 L884.3,659.5 L884.1,657.5 L883.9,655.5 L883.8,653.5 L883.8,651.5 L883.9,649.5 L884.0,647.5 L884.2,645.3 L884.5,643.1 L884.9,640.9 L885.4,638.6 L886.0,636.2 L886.6,633.9 L887.3,631.5 L888.1,629.2 L888.9,626.9 L889.8,624.7 L890.8,622.5 L891.8,620.4 L892.9,618.4 L893.9,616.5 L895.0,614.7 L896.2,613.1 L897.5,611.4 L898.8,609.7 L900.3,608.1 L901.8,606.5 L903.5,604.9 L905.1,603.4 L906.9,601.9 L908.6,600.4 L910.5,599.1 L912.3,597.8 L914.1,596.5 L916.0,595.3 L917.9,594.2 L919.7,593.2 L921.5,592.3 L923.2,591.5 L925.0,590.7 L926.8,590.1 L928.7,589.4 L930.6,588.9 L932.5,588.4 L934.4,587.9 L936.3,587.6 L938.3,587.2 L940.3,587.0 L942.3,586.8 L944.3,586.7 L946.3,586.6 L948.4,586.6 L950.4,586.6 L952.5,586.7 L954.6,586.8 L956.8,587.0 L959.0,587.3 L961.3,587.6 L963.6,587.9 L965.9,588.3 L968.1,588.8 L970.4,589.3 L972.6,589.9 L974.7,590.6 L976.8,591.3 L978.8,592.1 L980.7,593.0 L982.5,593.9 L984.2,594.8 L985.7,595.8 L987.2,597.0 L988.8,598.3 L990.3,599.8 L991.9,601.5 L993.5,603.2 L995.0,605.1 L996.5,607.1 L998.0,609.1 L999.3,611.1 L1000.6,613.2 L1001.7,615.2 L1002.8,617.1 L1003.7,619.0 L1004.5,620.8 L1005.1,622.4 L1005.6,623.8 L1005.9,625.0 L1006.1,626.2 L1006.2,627.4 L1006.3,628.5 L1006.2,629.7 L1006.1,630.8 L1005.9,631.9 L1005.6,632.9 L1005.3,634.0 L1004.8,635.0 L1004.3,635.9 L1003.8,636.9 L1003.1,637.8 L1002.5,638.7 L1001.7,639.5 L1000.9,640.2 L1000.1,640.9 L999.1,641.7 L997.8,642.4 L996.3,643.2 L994.7,643.9 L993.0,644.7 L991.2,645.3 L989.3,646.0 L987.4,646.5 L985.5,647.0 L983.6,647.5 L981.7,647.8 L979.9,648.1 L978.2,648.3 L976.7,648.4 L975.3,648.4 L974.1,648.3 L972.8,648.1 L971.4,647.8 L970.0,647.4 L968.5,646.9 L967.1,646.3 L965.6,645.6 L964.2,644.9 L962.8,644.1 L961.4,643.3 L960.2,642.5 L959.1,641.7 L958.0,640.9 L957.1,640.2 L956.4,639.5 L955.9,638.9 L955.6,638.6 L955.3,638.2 L955.1,637.8 L955.0,637.3 L954.9,636.7 L954.8,636.0 L954.8,635.3 L954.8,634.5 L954.9,633.8 L955.1,633.0 L955.3,632.3 L955.5,631.6 L955.7,631.0 L956.0,630.5 L956.2,630.0 L956.3,629.8 L956.2,629.8 L956.3,629.7 L956.6,629.6 L957.0,629.4 L957.5,629.2 L958.2,629.0 L958.9,628.8 L959.7,628.7 L960.5,628.5 L961.3,628.5 L962.1,628.4 L962.9,628.4 L963.6,628.4 L964.3,628.4 L964.8,628.4 L965.1,628.4 L965.1,628.4 L965.1,628.3 L965.1,628.3 L965.2,628.3 L965.4,628.4 L965.5,628.6 L965.7,628.8 L966.0,629.1 L966.2,629.5 L966.4,629.8 L966.6,630.2 L966.9,630.6 L967.1,631.0 L967.4,631.4 L967.7,631.8 L968.2,632.0 L971.8,630.0 L972.0,629.7 L972.1,629.6 L972.1,629.3 L972.1,628.9 L972.1,628.4 L972.0,627.8 L971.8,627.3 L971.7,626.6 L971.4,626.0 L971.1,625.3 L970.7,624.6 L970.2,623.8 L969.6,623.1 L968.8,622.5 L967.9,622.0 L966.9,621.6 L966.0,621.3 L965.2,621.2 L964.3,621.0 L963.3,620.9 L962.3,620.8 L961.2,620.7 L960.1,620.7 L959.0,620.7 L957.8,620.8 L956.6,620.9 L955.5,621.1 L954.3,621.4 L953.1,621.9 L951.9,622.4 L950.7,623.2 L949.7,624.2 L949.0,625.1 L948.3,626.1 L947.7,627.1 L947.2,628.2 L946.7,629.4 L946.3,630.6 L946.0,631.9 L945.7,633.2 L945.5,634.6 L945.4,636.0 L945.4,637.5 L945.6,639.0 L945.9,640.6 L946.5,642.1 L947.2,643.7 L948.1,645.1 L949.2,646.3 L950.2,647.4 L951.4,648.5 L952.7,649.7 L954.2,650.8 L955.7,651.9 L957.3,653.0 L959.0,654.1 L960.7,655.1 L962.6,656.0 L964.5,656.9 L966.4,657.7 L968.4,658.4 L970.5,658.9 L972.5,659.4 L974.7,659.6 L976.8,659.7 L978.9,659.7 L981.1,659.5 L983.4,659.3 L985.7,658.9 L988.0,658.5 L990.3,658.0 L992.7,657.4 L995.0,656.7 L997.2,656.0 L999.4,655.2 L1001.6,654.3 L1003.6,653.3 L1005.5,652.2 L1007.4,651.0 L1009.1,649.8 L1010.5,648.4 L1011.9,647.0 L1013.2,645.6 L1014.3,644.0 L1015.4,642.4 L1016.3,640.6 L1017.2,638.8 L1017.9,637.0 L1018.5,635.0 L1018.9,633.0 L1019.2,631.0 L1019.4,628.9 L1019.4,626.8 L1019.2,624.6 L1018.9,622.4 L1018.4,620.2 L1017.8,618.1 L1017.0,615.8 L1016.1,613.5 L1015.0,611.1 L1013.8,608.7 L1012.5,606.3 L1011.1,603.8 L1009.5,601.4 L1007.9,599.0 L1006.2,596.6 L1004.4,594.3 L1002.5,592.0 L1000.6,589.9 L998.6,587.8 L996.5,585.9 L994.3,584.2 L992.0,582.6 L989.6,581.1 L987.2,579.8 L984.7,578.6 L982.1,577.5 L979.5,576.6 L976.9,575.7 L974.3,574.9 L971.6,574.2 L968.9,573.6 L966.3,573.0 L963.6,572.6 L961.0,572.1 L958.5,571.8 L956.0,571.5 L953.5,571.3 L951.1,571.1 L948.6,571.0 L946.2,571.0 L943.7,571.1 L941.2,571.2 L938.7,571.3 L936.3,571.6 L933.8,571.9 L931.3,572.4 L928.9,572.9 L926.4,573.4 L924.0,574.1 L921.6,574.9 L919.2,575.7 L916.8,576.7 L914.5,577.7 L912.2,578.8 L909.9,580.0 L907.6,581.3 L905.4,582.7 L903.1,584.1 L900.8,585.7 L898.6,587.3 L896.4,589.0 L894.2,590.8 L892.1,592.6 L890.1,594.6 L888.1,596.6 L886.2,598.6 L884.3,600.8 L882.6,603.0 L881.0,605.3 L879.4,607.6 L878.0,610.0 L876.6,612.6 L875.3,615.2 L874.0,617.8 L872.9,620.5 L871.8,623.3 L870.8,626.1 L869.9,628.9 L869.1,631.7 L868.3,634.6 L867.7,637.4 L867.1,640.2 L866.7,643.0 L866.4,645.8 L866.1,648.5 L866.0,651.2 L866.0,653.9 L866.1,656.5 L866.3,659.2 L866.6,661.8 L866.9,664.5 L867.4,667.1 L868.0,669.7 L868.7,672.3 L869.4,674.9 L870.3,677.5 L871.3,680.0 L872.3,682.5 L873.5,684.9 L874.8,687.4 L876.1,689.8 L877.6,692.1 L879.2,694.5 L880.9,696.8 L882.7,699.1 L884.6,701.4 L886.6,703.6 L888.6,705.8 L890.8,707.9 L893.0,710.0 L895.2,712.1 L897.6,714.1 L899.9,716.0 L902.4,717.9 L904.9,719.7 L907.4,721.4 L910.0,723.1 L912.7,724.7 L915.5,726.3 L918.4,727.8 L921.4,729.2 L924.4,730.6 L927.4,731.9 L930.5,733.1 L933.6,734.3 L936.8,735.4 L939.9,736.5 L943.0,737.5 L946.0,738.4 L949.0,739.3 L952.0,740.2 L954.9,740.9 L957.8,741.6 L960.6,742.3 L963.3,742.8 L966.0,743.3 L968.6,743.8 L971.3,744.1 L973.8,744.4 L976.4,744.7 L979.0,744.9 L981.5,745.0 L984.1,745.1 L986.7,745.2 L989.3,745.2 L991.9,745.2 L994.6,745.2 L997.4,745.2 L1000.3,745.2 L1003.5,745.1 L1006.9,744.9 L1010.5,744.7 L1014.2,744.4 L1018.1,744.1 L1021.9,743.7 L1025.8,743.4 L1029.6,743.0 L1033.4,742.6 L1037.0,742.2 L1040.4,741.8 L1043.6,741.5 L1046.5,741.1 L1049.1,740.8 L1051.3,740.6 L1053.1,740.4Z M967.4,631.0 a2.6,2.6 0 1,0 5.2,0 a2.6,2.6 0 1,0 -5.2,0Z"/><path d="M881.5,642.7 L880.1,642.3 L878.3,641.8 L876.3,641.2 L874.0,640.6 L871.4,639.8 L868.7,639.1 L865.8,638.3 L862.9,637.5 L859.9,636.8 L856.8,636.1 L853.9,635.4 L851.0,634.9 L848.2,634.4 L845.2,633.9 L842.2,633.3 L839.1,632.8 L835.9,632.4 L832.8,631.9 L829.6,631.5 L826.4,631.2 L823.3,631.0 L820.3,630.9 L817.4,630.9 L814.6,631.1 L812.0,631.4 L809.5,631.8 L807.1,632.3 L804.7,632.9 L802.4,633.6 L800.2,634.4 L798.1,635.3 L796.0,636.3 L794.1,637.5 L792.2,638.7 L790.4,640.1 L788.8,641.7 L787.2,643.4 L785.7,645.3 L784.3,647.3 L783.0,649.4 L781.9,651.6 L780.8,653.9 L779.9,656.2 L779.1,658.6 L778.5,661.0 L778.0,663.3 L777.7,665.7 L777.7,668.0 L777.8,670.3 L778.1,672.6 L778.6,675.0 L779.3,677.3 L780.2,679.6 L781.1,681.8 L782.2,684.0 L783.4,686.0 L784.8,688.0 L786.2,689.9 L787.7,691.6 L789.4,693.1 L791.3,694.4 L793.3,695.6 L795.4,696.6 L797.6,697.4 L799.8,698.1 L802.1,698.6 L804.4,699.1 L806.7,699.4 L809.0,699.6 L811.1,699.7 L813.2,699.8 L815.2,699.7 L817.2,699.5 L819.2,699.1 L821.1,698.7 L823.0,698.1 L824.9,697.4 L826.7,696.6 L828.4,695.7 L830.1,694.7 L831.6,693.7 L833.1,692.6 L834.4,691.4 L835.5,690.2 L836.6,688.8 L837.5,687.2 L838.2,685.6 L838.7,683.9 L839.2,682.2 L839.5,680.5 L839.6,678.8 L839.7,677.1 L839.7,675.5 L839.5,673.9 L839.3,672.5 L838.8,671.0 L838.2,669.6 L837.4,668.3 L836.4,667.2 L835.3,666.1 L834.1,665.2 L832.9,664.4 L831.6,663.6 L830.4,663.0 L829.1,662.4 L827.9,662.0 L826.7,661.6 L825.5,661.4 L824.2,661.3 L822.9,661.3 L821.7,661.5 L820.5,661.9 L819.3,662.3 L818.2,662.7 L817.1,663.3 L816.2,663.9 L815.3,664.5 L814.4,665.2 L813.7,665.9 L813.1,666.8 L812.6,667.9 L812.5,669.1 L812.6,670.2 L812.8,671.2 L813.1,672.1 L813.5,673.0 L813.9,673.8 L814.3,674.6 L814.7,675.2 L815.0,675.8 L815.3,676.2 L815.6,676.5 L818.4,675.5 L818.4,675.0 L818.2,674.4 L818.0,673.7 L817.8,673.0 L817.5,672.2 L817.3,671.5 L817.1,670.8 L816.9,670.2 L816.8,669.6 L816.9,669.3 L816.9,669.2 L816.9,669.2 L817.1,669.0 L817.5,668.7 L818.0,668.3 L818.7,668.0 L819.4,667.6 L820.2,667.3 L821.0,667.0 L821.8,666.7 L822.6,666.6 L823.4,666.5 L824.0,666.5 L824.5,666.6 L825.2,666.8 L826.0,667.1 L826.9,667.5 L827.9,668.0 L828.8,668.5 L829.7,669.1 L830.6,669.8 L831.4,670.5 L832.1,671.1 L832.6,671.8 L832.9,672.4 L833.2,673.0 L833.3,673.7 L833.4,674.7 L833.5,675.7 L833.5,676.9 L833.4,678.2 L833.2,679.5 L832.9,680.8 L832.5,682.0 L832.1,683.2 L831.6,684.2 L831.1,685.1 L830.5,685.8 L829.7,686.5 L828.8,687.3 L827.7,688.1 L826.5,688.8 L825.2,689.5 L823.8,690.2 L822.3,690.8 L820.8,691.3 L819.3,691.7 L817.8,692.0 L816.3,692.2 L814.8,692.3 L813.2,692.3 L811.5,692.3 L809.6,692.1 L807.7,691.9 L805.8,691.5 L803.9,691.1 L802.0,690.6 L800.2,690.0 L798.5,689.3 L797.0,688.6 L795.7,687.8 L794.6,686.9 L793.6,685.9 L792.5,684.7 L791.5,683.3 L790.5,681.7 L789.6,680.1 L788.8,678.3 L788.0,676.5 L787.4,674.7 L786.9,672.9 L786.6,671.2 L786.4,669.5 L786.3,668.0 L786.4,666.5 L786.7,664.8 L787.1,663.0 L787.6,661.2 L788.3,659.3 L789.1,657.5 L789.9,655.7 L790.9,653.9 L791.9,652.3 L793.0,650.8 L794.1,649.5 L795.2,648.3 L796.4,647.3 L797.7,646.3 L799.0,645.5 L800.5,644.6 L802.0,643.9 L803.6,643.3 L805.4,642.7 L807.2,642.2 L809.1,641.7 L811.1,641.4 L813.2,641.1 L815.4,640.9 L817.6,640.8 L820.1,640.8 L822.7,641.0 L825.5,641.2 L828.4,641.5 L831.4,642.0 L834.4,642.4 L837.4,642.9 L840.4,643.5 L843.4,644.0 L846.3,644.6 L849.0,645.1 L851.7,645.7 L854.4,646.3 L857.3,647.1 L860.1,647.8 L862.9,648.6 L865.7,649.4 L868.4,650.2 L870.9,651.0 L873.2,651.7 L875.2,652.3 L877.1,652.9 L878.5,653.3Z M814.9,676.0 a2.1,2.1 0 1,0 4.2,0 a2.1,2.1 0 1,0 -4.2,0Z"/><path d="M1012.3,736.4 L1011.6,736.9 L1010.8,737.5 L1009.6,738.3 L1008.3,739.2 L1006.9,740.2 L1005.4,741.3 L1003.8,742.5 L1002.2,743.7 L1000.7,745.0 L999.2,746.4 L997.8,747.9 L996.6,749.4 L995.6,750.9 L994.6,752.4 L993.6,753.9 L992.7,755.6 L991.9,757.3 L991.1,759.0 L990.4,760.8 L989.8,762.7 L989.3,764.5 L989.0,766.5 L988.9,768.4 L989.0,770.3 L989.2,772.2 L989.7,774.1 L990.3,776.0 L991.1,777.9 L992.0,779.7 L993.0,781.4 L994.1,783.1 L995.3,784.8 L996.6,786.3 L997.9,787.7 L999.3,789.0 L1000.9,790.1 L1002.5,791.1 L1004.2,791.9 L1006.0,792.6 L1007.9,793.1 L1009.8,793.6 L1011.7,793.9 L1013.7,794.1 L1015.6,794.2 L1017.5,794.1 L1019.3,794.0 L1021.1,793.8 L1022.8,793.4 L1024.6,792.9 L1026.2,792.2 L1027.9,791.3 L1029.4,790.4 L1030.9,789.3 L1032.4,788.2 L1033.7,787.0 L1035.0,785.7 L1036.1,784.4 L1037.2,783.1 L1038.1,781.8 L1038.8,780.5 L1039.5,779.0 L1039.9,777.5 L1040.1,775.9 L1040.2,774.4 L1040.2,772.8 L1040.1,771.3 L1039.9,769.8 L1039.5,768.4 L1039.1,767.0 L1038.7,765.8 L1038.1,764.6 L1037.4,763.4 L1036.6,762.3 L1035.6,761.4 L1034.6,760.6 L1033.4,759.8 L1032.2,759.2 L1031.0,758.7 L1029.8,758.2 L1028.5,757.9 L1027.3,757.6 L1026.1,757.4 L1024.9,757.4 L1023.7,757.4 L1022.5,757.7 L1021.3,758.2 L1020.2,758.8 L1019.2,759.5 L1018.3,760.2 L1017.4,761.1 L1016.6,761.9 L1015.9,762.8 L1015.2,763.7 L1014.7,764.6 L1014.2,765.4 L1013.9,766.4 L1013.8,767.6 L1014.0,768.7 L1014.4,769.6 L1014.9,770.4 L1015.4,771.1 L1016.0,771.8 L1016.6,772.3 L1017.2,772.8 L1017.7,773.2 L1018.2,773.6 L1018.5,773.8 L1018.8,773.9 L1021.2,772.1 L1021.0,771.6 L1020.7,771.1 L1020.3,770.6 L1019.8,770.1 L1019.4,769.6 L1019.0,769.1 L1018.6,768.6 L1018.3,768.2 L1018.1,767.8 L1018.1,767.6 L1018.1,767.5 L1018.1,767.6 L1018.2,767.4 L1018.5,766.9 L1018.9,766.4 L1019.4,765.8 L1020.0,765.2 L1020.7,764.6 L1021.4,764.0 L1022.1,763.5 L1022.8,763.1 L1023.4,762.8 L1023.9,762.6 L1024.3,762.6 L1024.8,762.6 L1025.5,762.6 L1026.2,762.8 L1027.1,763.0 L1028.0,763.3 L1028.9,763.7 L1029.7,764.1 L1030.5,764.6 L1031.2,765.1 L1031.8,765.6 L1032.2,766.1 L1032.6,766.6 L1032.9,767.2 L1033.2,767.9 L1033.5,768.8 L1033.7,769.8 L1033.9,770.9 L1034.0,771.9 L1034.1,773.0 L1034.1,774.1 L1033.9,775.1 L1033.8,776.0 L1033.5,776.8 L1033.2,777.5 L1032.7,778.3 L1032.0,779.2 L1031.2,780.1 L1030.3,781.1 L1029.3,782.0 L1028.1,783.0 L1027.0,783.8 L1025.8,784.6 L1024.6,785.3 L1023.4,785.9 L1022.2,786.3 L1021.2,786.6 L1020.0,786.8 L1018.7,786.9 L1017.3,787.0 L1015.8,787.0 L1014.3,786.8 L1012.8,786.6 L1011.3,786.3 L1009.8,786.0 L1008.4,785.5 L1007.2,785.0 L1006.1,784.5 L1005.1,783.9 L1004.3,783.2 L1003.3,782.3 L1002.4,781.2 L1001.5,780.1 L1000.6,778.8 L999.8,777.4 L999.0,776.1 L998.4,774.7 L997.9,773.3 L997.4,772.0 L997.2,770.7 L997.0,769.7 L997.0,768.6 L997.2,767.5 L997.4,766.3 L997.7,765.0 L998.2,763.7 L998.8,762.3 L999.4,761.0 L1000.2,759.6 L1000.9,758.3 L1001.8,757.0 L1002.6,755.7 L1003.4,754.6 L1004.2,753.6 L1005.2,752.6 L1006.4,751.6 L1007.7,750.5 L1009.1,749.5 L1010.5,748.5 L1011.9,747.5 L1013.3,746.6 L1014.6,745.7 L1015.8,744.9 L1016.9,744.2 L1017.7,743.6Z M1017.9,773.0 a2.1,2.1 0 1,0 4.2,0 a2.1,2.1 0 1,0 -4.2,0Z"/><path d="M1096.5,482.2 L1095.7,481.2 L1094.7,479.9 L1093.6,478.4 L1092.2,476.6 L1090.8,474.6 L1089.2,472.6 L1087.5,470.4 L1085.7,468.3 L1083.8,466.2 L1081.8,464.2 L1079.7,462.3 L1077.6,460.6 L1075.5,459.1 L1073.4,457.7 L1071.2,456.2 L1068.8,454.9 L1066.4,453.5 L1064.0,452.3 L1061.5,451.1 L1058.9,450.1 L1056.3,449.2 L1053.7,448.4 L1051.1,447.8 L1048.5,447.5 L1045.8,447.3 L1043.2,447.3 L1040.5,447.4 L1037.7,447.7 L1035.0,448.1 L1032.3,448.7 L1029.7,449.4 L1027.1,450.2 L1024.6,451.2 L1022.2,452.3 L1019.9,453.5 L1017.8,454.9 L1015.8,456.5 L1013.9,458.3 L1012.1,460.2 L1010.4,462.3 L1008.8,464.5 L1007.4,466.8 L1006.1,469.1 L1004.9,471.5 L1003.9,473.8 L1003.1,476.1 L1002.6,478.4 L1002.2,480.6 L1002.1,482.9 L1002.4,485.1 L1002.9,487.3 L1003.6,489.4 L1004.5,491.4 L1005.5,493.3 L1006.6,495.1 L1007.8,496.8 L1009.0,498.4 L1010.3,499.9 L1011.5,501.2 L1012.8,502.4 L1014.1,503.5 L1015.6,504.5 L1017.1,505.4 L1018.6,506.1 L1020.2,506.6 L1021.8,507.1 L1023.4,507.4 L1025.0,507.7 L1026.6,507.9 L1028.1,508.0 L1029.6,508.1 L1031.0,508.1 L1032.6,508.0 L1034.1,507.8 L1035.7,507.5 L1037.2,507.1 L1038.7,506.7 L1040.2,506.2 L1041.6,505.6 L1043.0,505.0 L1044.3,504.4 L1045.5,503.7 L1046.6,503.0 L1047.6,502.3 L1048.6,501.6 L1049.5,500.8 L1050.3,499.9 L1051.0,499.0 L1051.7,498.1 L1052.2,497.1 L1052.7,496.1 L1053.1,495.1 L1053.4,494.0 L1053.6,493.0 L1053.7,491.9 L1053.7,490.8 L1053.5,489.7 L1053.2,488.5 L1052.8,487.4 L1052.3,486.4 L1051.7,485.3 L1051.0,484.3 L1050.3,483.3 L1049.6,482.4 L1048.8,481.6 L1048.0,480.8 L1047.2,480.1 L1046.3,479.5 L1045.4,478.9 L1044.4,478.6 L1043.4,478.3 L1042.4,478.1 L1041.4,478.0 L1040.4,478.0 L1039.4,478.0 L1038.4,478.1 L1037.5,478.2 L1036.7,478.4 L1035.8,478.7 L1035.0,479.0 L1034.2,479.5 L1033.5,480.1 L1033.0,480.8 L1032.5,481.5 L1032.1,482.3 L1031.8,483.0 L1031.5,483.8 L1031.3,484.5 L1031.2,485.2 L1031.1,485.9 L1031.0,486.6 L1031.1,487.3 L1031.4,488.2 L1031.9,488.9 L1032.5,489.4 L1033.1,489.7 L1033.7,489.9 L1034.2,490.1 L1034.8,490.2 L1035.3,490.3 L1035.7,490.4 L1036.0,490.4 L1036.3,490.4 L1036.5,490.4 L1037.5,487.6 L1037.3,487.4 L1036.9,487.2 L1036.5,487.1 L1036.1,486.9 L1035.8,486.8 L1035.4,486.7 L1035.1,486.5 L1034.8,486.4 L1034.7,486.3 L1034.7,486.3 L1034.8,486.4 L1034.9,486.7 L1034.9,486.7 L1035.0,486.4 L1035.1,486.0 L1035.2,485.6 L1035.4,485.1 L1035.6,484.7 L1035.8,484.2 L1036.1,483.8 L1036.4,483.5 L1036.6,483.2 L1036.8,483.1 L1037.0,483.0 L1037.3,482.9 L1037.7,482.8 L1038.3,482.7 L1038.9,482.6 L1039.6,482.6 L1040.3,482.6 L1041.0,482.7 L1041.6,482.8 L1042.3,482.9 L1042.8,483.1 L1043.3,483.3 L1043.7,483.5 L1044.1,483.9 L1044.6,484.4 L1045.1,484.9 L1045.7,485.6 L1046.2,486.3 L1046.7,487.1 L1047.2,487.9 L1047.6,488.7 L1047.9,489.5 L1048.2,490.1 L1048.3,490.7 L1048.3,491.2 L1048.3,491.6 L1048.2,492.2 L1048.1,492.7 L1047.9,493.3 L1047.7,493.9 L1047.4,494.5 L1047.0,495.0 L1046.6,495.6 L1046.1,496.2 L1045.6,496.7 L1045.0,497.2 L1044.4,497.7 L1043.6,498.1 L1042.7,498.7 L1041.7,499.2 L1040.6,499.7 L1039.4,500.1 L1038.2,500.6 L1036.9,501.0 L1035.7,501.3 L1034.4,501.6 L1033.2,501.8 L1032.1,501.9 L1031.0,501.9 L1029.8,501.9 L1028.5,501.8 L1027.3,501.7 L1026.0,501.5 L1024.7,501.2 L1023.5,500.9 L1022.3,500.5 L1021.1,500.1 L1020.0,499.6 L1019.0,499.0 L1018.1,498.3 L1017.2,497.6 L1016.3,496.6 L1015.3,495.5 L1014.3,494.2 L1013.3,492.9 L1012.3,491.4 L1011.4,490.0 L1010.7,488.4 L1010.0,486.9 L1009.6,485.4 L1009.3,484.0 L1009.1,482.7 L1009.2,481.4 L1009.5,480.0 L1010.0,478.3 L1010.6,476.5 L1011.5,474.6 L1012.5,472.6 L1013.7,470.6 L1014.9,468.7 L1016.3,466.9 L1017.7,465.1 L1019.2,463.6 L1020.7,462.2 L1022.2,461.1 L1023.8,460.1 L1025.6,459.2 L1027.5,458.3 L1029.6,457.6 L1031.8,456.9 L1034.1,456.4 L1036.4,455.9 L1038.7,455.6 L1041.0,455.4 L1043.3,455.3 L1045.5,455.4 L1047.5,455.5 L1049.6,455.9 L1051.6,456.4 L1053.7,457.0 L1055.9,457.8 L1058.1,458.7 L1060.3,459.8 L1062.4,460.9 L1064.6,462.1 L1066.7,463.4 L1068.7,464.8 L1070.6,466.1 L1072.4,467.4 L1074.0,468.8 L1075.7,470.3 L1077.4,472.1 L1079.0,474.0 L1080.6,476.0 L1082.2,478.0 L1083.7,480.0 L1085.1,481.9 L1086.4,483.7 L1087.6,485.3 L1088.6,486.7 L1089.5,487.8Z M1034.9,489.0 a2.1,2.1 0 1,0 4.2,0 a2.1,2.1 0 1,0 -4.2,0Z"/><path d="M1012.6,456.1 L1011.9,455.9 L1011.0,455.8 L1010.1,455.7 L1009.0,455.6 L1008.0,455.5 L1006.9,455.3 L1005.8,455.1 L1004.7,454.9 L1003.7,454.7 L1002.9,454.4 L1002.2,454.1 L1001.7,453.8 L1001.1,453.3 L1000.5,452.8 L999.9,452.1 L999.3,451.3 L998.7,450.5 L998.2,449.6 L997.7,448.8 L997.3,447.9 L997.0,447.1 L996.7,446.3 L996.6,445.6 L996.5,445.0 L996.6,444.5 L996.7,443.8 L996.9,443.1 L997.2,442.3 L997.6,441.5 L998.1,440.7 L998.6,439.9 L999.2,439.1 L999.8,438.4 L1000.3,437.8 L1000.9,437.3 L1001.3,436.9 L1001.8,436.6 L1002.3,436.3 L1002.8,436.1 L1003.4,435.9 L1004.1,435.7 L1004.8,435.6 L1005.4,435.6 L1006.1,435.5 L1006.7,435.6 L1007.3,435.7 L1007.8,435.8 L1008.2,435.9 L1008.5,436.1 L1008.9,436.3 L1009.3,436.7 L1009.8,437.1 L1010.2,437.6 L1010.6,438.2 L1011.0,438.7 L1011.4,439.3 L1011.7,439.9 L1011.9,440.4 L1012.1,440.9 L1012.2,441.3 L1012.2,441.5 L1012.2,441.9 L1012.1,442.3 L1012.0,442.7 L1011.8,443.2 L1011.6,443.7 L1011.4,444.1 L1011.1,444.6 L1010.8,444.9 L1010.6,445.3 L1010.3,445.5 L1010.2,445.6 L1010.1,445.7 L1010.0,445.7 L1009.7,445.8 L1009.4,445.8 L1009.0,445.7 L1008.6,445.7 L1008.2,445.6 L1007.8,445.5 L1007.5,445.4 L1007.3,445.2 L1007.1,445.1 L1007.1,445.2 L1007.2,445.4 L1007.2,445.4 L1007.2,445.3 L1007.2,445.0 L1007.2,444.7 L1007.3,444.4 L1007.5,444.0 L1007.6,443.6 L1007.7,443.3 L1007.8,442.9 L1007.9,442.6 L1007.9,442.3 L1006.1,441.7 L1005.9,441.8 L1005.8,442.0 L1005.6,442.3 L1005.4,442.7 L1005.2,443.1 L1005.0,443.5 L1004.8,444.0 L1004.7,444.4 L1004.5,444.9 L1004.5,445.5 L1004.6,446.2 L1004.9,446.8 L1005.3,447.3 L1005.8,447.6 L1006.2,447.9 L1006.8,448.1 L1007.3,448.4 L1007.9,448.6 L1008.5,448.7 L1009.1,448.8 L1009.8,448.9 L1010.5,448.8 L1011.2,448.7 L1011.8,448.4 L1012.4,448.0 L1012.9,447.6 L1013.3,447.1 L1013.8,446.6 L1014.2,446.0 L1014.6,445.3 L1015.0,444.7 L1015.3,443.9 L1015.6,443.2 L1015.8,442.4 L1015.8,441.6 L1015.8,440.7 L1015.7,439.9 L1015.4,439.2 L1015.1,438.4 L1014.8,437.6 L1014.3,436.8 L1013.9,436.0 L1013.3,435.2 L1012.8,434.5 L1012.1,433.8 L1011.4,433.1 L1010.7,432.6 L1009.8,432.1 L1009.0,431.8 L1008.1,431.5 L1007.2,431.4 L1006.3,431.3 L1005.3,431.2 L1004.4,431.3 L1003.4,431.4 L1002.4,431.5 L1001.4,431.8 L1000.5,432.2 L999.5,432.6 L998.7,433.1 L997.8,433.8 L997.1,434.5 L996.3,435.3 L995.5,436.1 L994.7,437.1 L994.0,438.1 L993.4,439.1 L992.8,440.2 L992.3,441.3 L991.9,442.5 L991.6,443.7 L991.5,445.0 L991.5,446.2 L991.7,447.5 L992.0,448.7 L992.5,449.9 L993.0,451.1 L993.5,452.2 L994.2,453.4 L994.9,454.5 L995.7,455.5 L996.5,456.5 L997.4,457.4 L998.3,458.2 L999.5,459.0 L1000.7,459.6 L1002.0,460.1 L1003.3,460.5 L1004.6,460.8 L1005.9,461.1 L1007.1,461.3 L1008.3,461.4 L1009.3,461.6 L1010.2,461.7 L1010.9,461.8 L1011.4,461.9Z M1005.4,442.0 a1.6,1.6 0 1,0 3.2,0 a1.6,1.6 0 1,0 -3.2,0Z"/></g>
<ellipse cx="1232" cy="612" rx="70" ry="62" fill="#e6eef8"/><clipPath id="hc1"><ellipse cx="1236" cy="613" rx="52" ry="45"/></clipPath><use href="#bgg" clip-path="url(#hc1)"/><ellipse cx="1236" cy="616" rx="34" ry="32" fill="#e6eef8"/><ellipse cx="1410" cy="579" rx="115" ry="89" fill="#e6eef8"/><clipPath id="hc2"><ellipse cx="1410" cy="579" rx="86" ry="65"/></clipPath><use href="#bgg" clip-path="url(#hc2)"/><ellipse cx="1410" cy="579.5" rx="59" ry="41.5" fill="#e6eef8"/><clipPath id="hc3"><ellipse cx="1410" cy="579" rx="45" ry="29"/></clipPath><use href="#bgg" clip-path="url(#hc3)"/><ellipse cx="1320" cy="800" rx="200" ry="172" fill="#e6eef8"/><path d="M1175,720 L1186,661 Q1230,634 1298,621 L1316,603 L1330,720Z" fill="#e6eef8"/><ellipse cx="1093" cy="915" rx="96" ry="87" fill="#e6eef8"/><clipPath id="hc4"><ellipse cx="1311" cy="788" rx="140" ry="121"/></clipPath><use href="#bgg" clip-path="url(#hc4)"/><ellipse cx="1311" cy="784" rx="90" ry="75" fill="#e6eef8"/><clipPath id="hc5"><ellipse cx="1311" cy="786" rx="65" ry="51"/></clipPath><use href="#bgg" clip-path="url(#hc5)"/><clipPath id="hc6"><ellipse cx="1093" cy="915" rx="71" ry="73"/></clipPath><use href="#bgg" clip-path="url(#hc6)"/><ellipse cx="1093" cy="915" rx="52" ry="54" fill="#e6eef8"/><clipPath id="hc7"><ellipse cx="1093" cy="915" rx="42" ry="45"/></clipPath><use href="#bgg" clip-path="url(#hc7)"/>
<ellipse cx="1132" cy="569" rx="16.3" ry="15.5" fill="none" stroke="#e6eef8" stroke-width="5.3"/><ellipse cx="1132" cy="569" rx="8.2" ry="7.7" fill="none" stroke="#e6eef8" stroke-width="2.9"/><ellipse cx="1117" cy="653" rx="28.4" ry="24.9" fill="none" stroke="#e6eef8" stroke-width="9.2"/><ellipse cx="1117" cy="653" rx="14.2" ry="12.5" fill="none" stroke="#e6eef8" stroke-width="5.0"/><ellipse cx="1108" cy="762" rx="14.6" ry="14.6" fill="none" stroke="#e6eef8" stroke-width="4.8"/><ellipse cx="1108" cy="762" rx="7.3" ry="7.3" fill="none" stroke="#e6eef8" stroke-width="2.5"/><ellipse cx="1082" cy="811" rx="27.5" ry="23.2" fill="none" stroke="#e6eef8" stroke-width="9.0"/><ellipse cx="1082" cy="811" rx="13.8" ry="11.6" fill="none" stroke="#e6eef8" stroke-width="4.8"/><ellipse cx="1003" cy="836" rx="12.9" ry="12.0" fill="none" stroke="#e6eef8" stroke-width="4.2"/><ellipse cx="1003" cy="836" rx="6.5" ry="6.0" fill="none" stroke="#e6eef8" stroke-width="2.2"/><ellipse cx="1200" cy="530" rx="15.1" ry="12.9" fill="none" stroke="#e6eef8" stroke-width="4.9"/><ellipse cx="1200" cy="530" rx="7.5" ry="6.5" fill="none" stroke="#e6eef8" stroke-width="2.6"/><ellipse cx="1263" cy="531" rx="11.2" ry="9.5" fill="none" stroke="#e6eef8" stroke-width="3.6"/><ellipse cx="1263" cy="531" rx="6.2" ry="5.3" fill="#e6eef8"/><ellipse cx="1270" cy="455" rx="11.2" ry="10.3" fill="none" stroke="#e6eef8" stroke-width="3.6"/><ellipse cx="1270" cy="455" rx="5.6" ry="5.2" fill="none" stroke="#e6eef8" stroke-width="1.9"/>
<g fill="#e6eef8"><path d="M1182.4,413.7 L1180.8,414.7 L1178.8,415.8 L1176.5,417.2 L1173.9,418.7 L1171.0,420.3 L1167.9,422.1 L1164.7,424.0 L1161.2,426.1 L1157.7,428.3 L1154.1,430.6 L1150.4,433.0 L1146.8,435.5 L1143.0,438.1 L1139.1,440.9 L1134.9,443.8 L1130.5,446.9 L1126.0,450.1 L1121.5,453.4 L1116.9,456.8 L1112.4,460.3 L1107.9,463.8 L1103.6,467.3 L1099.5,470.9 L1095.6,474.4 L1092.0,477.8 L1088.4,481.1 L1084.9,484.5 L1081.5,487.9 L1078.2,491.4 L1075.0,494.9 L1071.8,498.6 L1068.8,502.3 L1065.8,506.1 L1063.0,510.1 L1060.3,514.3 L1057.8,518.5 L1055.4,523.0 L1053.1,527.4 L1051.0,532.0 L1048.9,536.7 L1047.1,541.5 L1045.3,546.4 L1043.7,551.4 L1042.1,556.4 L1040.7,561.6 L1039.4,566.9 L1038.3,572.2 L1037.2,577.7 L1036.2,583.3 L1035.4,589.1 L1034.7,595.1 L1034.1,601.2 L1033.6,607.4 L1033.2,613.7 L1033.0,620.0 L1032.8,626.2 L1032.8,632.4 L1032.8,638.6 L1032.9,644.6 L1033.1,650.5 L1033.4,656.3 L1033.8,662.0 L1034.2,667.7 L1034.8,673.4 L1035.4,679.0 L1036.2,684.6 L1037.1,690.3 L1038.1,695.9 L1039.2,701.4 L1040.6,707.0 L1042.1,712.6 L1043.8,718.1 L1045.6,723.6 L1047.7,729.1 L1049.8,734.5 L1052.2,739.9 L1054.7,745.3 L1057.3,750.6 L1060.0,755.8 L1062.9,761.0 L1065.8,766.2 L1068.9,771.2 L1072.0,776.2 L1075.3,781.1 L1078.8,786.1 L1082.6,791.1 L1086.6,796.1 L1090.7,801.0 L1095.0,805.8 L1099.2,810.5 L1103.4,815.0 L1107.5,819.4 L1111.5,823.5 L1115.2,827.3 L1118.7,830.9 L1121.8,834.2 L1124.9,837.3 L1127.9,840.2 L1130.8,842.8 L1133.5,845.3 L1136.1,847.5 L1138.5,849.5 L1140.8,851.3 L1142.8,852.8 L1144.6,854.2 L1146.1,855.4 L1147.4,856.4 L1148.4,857.3 L1163.6,838.7 L1162.2,837.6 L1160.7,836.4 L1159.0,835.2 L1157.2,833.9 L1155.3,832.5 L1153.2,830.9 L1151.0,829.2 L1148.7,827.3 L1146.3,825.3 L1143.7,823.0 L1141.0,820.6 L1138.2,817.8 L1135.0,814.7 L1131.4,811.2 L1127.6,807.5 L1123.7,803.6 L1119.6,799.5 L1115.4,795.3 L1111.3,790.9 L1107.2,786.5 L1103.2,782.0 L1099.5,777.6 L1095.9,773.2 L1092.7,768.9 L1089.6,764.5 L1086.6,759.9 L1083.6,755.3 L1080.8,750.7 L1078.0,745.9 L1075.3,741.2 L1072.8,736.3 L1070.4,731.5 L1068.1,726.6 L1066.0,721.7 L1064.0,716.8 L1062.2,711.9 L1060.6,707.0 L1059.1,702.0 L1057.8,697.0 L1056.6,692.0 L1055.5,686.9 L1054.6,681.7 L1053.7,676.5 L1053.0,671.2 L1052.3,665.9 L1051.8,660.5 L1051.3,655.0 L1050.9,649.5 L1050.5,643.9 L1050.2,638.1 L1050.0,632.2 L1049.9,626.3 L1049.9,620.3 L1050.0,614.3 L1050.2,608.4 L1050.5,602.5 L1050.9,596.7 L1051.4,591.0 L1052.1,585.6 L1052.8,580.3 L1053.7,575.2 L1054.7,570.2 L1055.7,565.3 L1056.9,560.5 L1058.2,555.7 L1059.6,551.1 L1061.1,546.6 L1062.7,542.2 L1064.4,537.8 L1066.2,533.6 L1068.2,529.5 L1070.2,525.5 L1072.4,521.6 L1074.7,517.8 L1077.1,514.2 L1079.7,510.7 L1082.4,507.2 L1085.2,503.8 L1088.1,500.4 L1091.1,497.1 L1094.3,493.8 L1097.6,490.4 L1100.9,487.0 L1104.4,483.6 L1108.0,480.3 L1111.8,476.8 L1115.8,473.3 L1120.0,469.8 L1124.3,466.4 L1128.7,462.9 L1133.0,459.6 L1137.4,456.3 L1141.6,453.1 L1145.7,450.1 L1149.6,447.2 L1153.2,444.5 L1156.7,442.0 L1160.1,439.6 L1163.5,437.3 L1166.9,435.1 L1170.2,433.0 L1173.3,431.0 L1176.3,429.2 L1179.1,427.5 L1181.6,425.9 L1183.9,424.5 L1186.0,423.3 L1187.6,422.3Z M1143.4,848.0 a12.6,12.6 0 1,0 25.2,0 a12.6,12.6 0 1,0 -25.2,0Z"/><path d="M1050.9,719.6 L1049.0,719.8 L1046.7,720.0 L1044.1,720.4 L1041.2,720.7 L1038.0,721.1 L1034.6,721.5 L1031.0,722.0 L1027.4,722.4 L1023.6,722.8 L1019.9,723.2 L1016.2,723.6 L1012.5,724.0 L1009.0,724.3 L1005.7,724.5 L1002.6,724.7 L999.7,724.8 L997.0,724.9 L994.3,725.0 L991.8,725.0 L989.3,725.1 L986.9,725.1 L984.6,725.0 L982.4,725.0 L980.2,724.9 L978.0,724.7 L975.8,724.6 L973.7,724.3 L971.5,724.1 L969.3,723.7 L967.0,723.4 L964.7,722.9 L962.2,722.4 L959.7,721.8 L957.0,721.1 L954.3,720.4 L951.5,719.6 L948.7,718.8 L945.9,717.9 L943.1,717.0 L940.2,716.1 L937.4,715.0 L934.7,714.0 L932.0,712.9 L929.4,711.8 L926.9,710.6 L924.5,709.4 L922.2,708.1 L920.0,706.9 L917.9,705.5 L915.7,704.1 L913.6,702.6 L911.6,701.1 L909.5,699.5 L907.5,697.9 L905.6,696.2 L903.7,694.5 L901.9,692.7 L900.2,690.9 L898.6,689.1 L897.0,687.3 L895.6,685.5 L894.2,683.8 L893.0,682.0 L891.9,680.2 L890.8,678.5 L889.8,676.7 L888.9,674.9 L888.1,673.0 L887.3,671.1 L886.7,669.2 L886.1,667.3 L885.5,665.4 L885.1,663.4 L884.7,661.5 L884.3,659.5 L884.1,657.5 L883.9,655.5 L883.8,653.5 L883.8,651.5 L883.9,649.5 L884.0,647.5 L884.2,645.3 L884.5,643.1 L884.9,640.9 L885.4,638.6 L886.0,636.2 L886.6,633.9 L887.3,631.5 L888.1,629.2 L888.9,626.9 L889.8,624.7 L890.8,622.5 L891.8,620.4 L892.9,618.4 L893.9,616.5 L895.0,614.7 L896.2,613.1 L897.5,611.4 L898.8,609.7 L900.3,608.1 L901.8,606.5 L903.5,604.9 L905.1,603.4 L906.9,601.9 L908.6,600.4 L910.5,599.1 L912.3,597.8 L914.1,596.5 L916.0,595.3 L917.9,594.2 L919.7,593.2 L921.5,592.3 L923.2,591.5 L925.0,590.7 L926.8,590.1 L928.7,589.4 L930.6,588.9 L932.5,588.4 L934.4,587.9 L936.3,587.6 L938.3,587.2 L940.3,587.0 L942.3,586.8 L944.3,586.7 L946.3,586.6 L948.4,586.6 L950.4,586.6 L952.5,586.7 L954.6,586.8 L956.8,587.0 L959.0,587.3 L961.3,587.6 L963.6,587.9 L965.9,588.3 L968.1,588.8 L970.4,589.3 L972.6,589.9 L974.7,590.6 L976.8,591.3 L978.8,592.1 L980.7,593.0 L982.5,593.9 L984.2,594.8 L985.7,595.8 L987.2,597.0 L988.8,598.3 L990.3,599.8 L991.9,601.5 L993.5,603.2 L995.0,605.1 L996.5,607.1 L998.0,609.1 L999.3,611.1 L1000.6,613.2 L1001.7,615.2 L1002.8,617.1 L1003.7,619.0 L1004.5,620.8 L1005.1,622.4 L1005.6,623.8 L1005.9,625.0 L1006.1,626.2 L1006.2,627.4 L1006.3,628.5 L1006.2,629.7 L1006.1,630.8 L1005.9,631.9 L1005.6,632.9 L1005.3,634.0 L1004.8,635.0 L1004.3,635.9 L1003.8,636.9 L1003.1,637.8 L1002.5,638.7 L1001.7,639.5 L1000.9,640.2 L1000.1,640.9 L999.1,641.7 L997.8,642.4 L996.3,643.2 L994.7,643.9 L993.0,644.7 L991.2,645.3 L989.3,646.0 L987.4,646.5 L985.5,647.0 L983.6,647.5 L981.7,647.8 L979.9,648.1 L978.2,648.3 L976.7,648.4 L975.3,648.4 L974.1,648.3 L972.8,648.1 L971.4,647.8 L970.0,647.4 L968.5,646.9 L967.1,646.3 L965.6,645.6 L964.2,644.9 L962.8,644.1 L961.4,643.3 L960.2,642.5 L959.1,641.7 L958.0,640.9 L957.1,640.2 L956.4,639.5 L955.9,638.9 L955.6,638.6 L955.3,638.2 L955.1,637.8 L955.0,637.3 L954.9,636.7 L954.8,636.0 L954.8,635.3 L954.8,634.5 L954.9,633.8 L955.1,633.0 L955.3,632.3 L955.5,631.6 L955.7,631.0 L956.0,630.5 L956.2,630.0 L956.3,629.8 L956.2,629.8 L956.3,629.7 L956.6,629.6 L957.0,629.4 L957.5,629.2 L958.2,629.0 L958.9,628.8 L959.7,628.7 L960.5,628.5 L961.3,628.5 L962.1,628.4 L962.9,628.4 L963.6,628.4 L964.3,628.4 L964.8,628.4 L965.1,628.4 L965.1,628.4 L965.1,628.3 L965.1,628.3 L965.2,628.3 L965.4,628.4 L965.5,628.6 L965.7,628.8 L966.0,629.1 L966.2,629.5 L966.4,629.8 L966.6,630.2 L966.9,630.6 L967.1,631.0 L967.4,631.4 L967.7,631.8 L968.2,632.0 L971.8,630.0 L972.0,629.7 L972.1,629.6 L972.1,629.3 L972.1,628.9 L972.1,628.4 L972.0,627.8 L971.8,627.3 L971.7,626.6 L971.4,626.0 L971.1,625.3 L970.7,624.6 L970.2,623.8 L969.6,623.1 L968.8,622.5 L967.9,622.0 L966.9,621.6 L966.0,621.3 L965.2,621.2 L964.3,621.0 L963.3,620.9 L962.3,620.8 L961.2,620.7 L960.1,620.7 L959.0,620.7 L957.8,620.8 L956.6,620.9 L955.5,621.1 L954.3,621.4 L953.1,621.9 L951.9,622.4 L950.7,623.2 L949.7,624.2 L949.0,625.1 L948.3,626.1 L947.7,627.1 L947.2,628.2 L946.7,629.4 L946.3,630.6 L946.0,631.9 L945.7,633.2 L945.5,634.6 L945.4,636.0 L945.4,637.5 L945.6,639.0 L945.9,640.6 L946.5,642.1 L947.2,643.7 L948.1,645.1 L949.2,646.3 L950.2,647.4 L951.4,648.5 L952.7,649.7 L954.2,650.8 L955.7,651.9 L957.3,653.0 L959.0,654.1 L960.7,655.1 L962.6,656.0 L964.5,656.9 L966.4,657.7 L968.4,658.4 L970.5,658.9 L972.5,659.4 L974.7,659.6 L976.8,659.7 L978.9,659.7 L981.1,659.5 L983.4,659.3 L985.7,658.9 L988.0,658.5 L990.3,658.0 L992.7,657.4 L995.0,656.7 L997.2,656.0 L999.4,655.2 L1001.6,654.3 L1003.6,653.3 L1005.5,652.2 L1007.4,651.0 L1009.1,649.8 L1010.5,648.4 L1011.9,647.0 L1013.2,645.6 L1014.3,644.0 L1015.4,642.4 L1016.3,640.6 L1017.2,638.8 L1017.9,637.0 L1018.5,635.0 L1018.9,633.0 L1019.2,631.0 L1019.4,628.9 L1019.4,626.8 L1019.2,624.6 L1018.9,622.4 L1018.4,620.2 L1017.8,618.1 L1017.0,615.8 L1016.1,613.5 L1015.0,611.1 L1013.8,608.7 L1012.5,606.3 L1011.1,603.8 L1009.5,601.4 L1007.9,599.0 L1006.2,596.6 L1004.4,594.3 L1002.5,592.0 L1000.6,589.9 L998.6,587.8 L996.5,585.9 L994.3,584.2 L992.0,582.6 L989.6,581.1 L987.2,579.8 L984.7,578.6 L982.1,577.5 L979.5,576.6 L976.9,575.7 L974.3,574.9 L971.6,574.2 L968.9,573.6 L966.3,573.0 L963.6,572.6 L961.0,572.1 L958.5,571.8 L956.0,571.5 L953.5,571.3 L951.1,571.1 L948.6,571.0 L946.2,571.0 L943.7,571.1 L941.2,571.2 L938.7,571.3 L936.3,571.6 L933.8,571.9 L931.3,572.4 L928.9,572.9 L926.4,573.4 L924.0,574.1 L921.6,574.9 L919.2,575.7 L916.8,576.7 L914.5,577.7 L912.2,578.8 L909.9,580.0 L907.6,581.3 L905.4,582.7 L903.1,584.1 L900.8,585.7 L898.6,587.3 L896.4,589.0 L894.2,590.8 L892.1,592.6 L890.1,594.6 L888.1,596.6 L886.2,598.6 L884.3,600.8 L882.6,603.0 L881.0,605.3 L879.4,607.6 L878.0,610.0 L876.6,612.6 L875.3,615.2 L874.0,617.8 L872.9,620.5 L871.8,623.3 L870.8,626.1 L869.9,628.9 L869.1,631.7 L868.3,634.6 L867.7,637.4 L867.1,640.2 L866.7,643.0 L866.4,645.8 L866.1,648.5 L866.0,651.2 L866.0,653.9 L866.1,656.5 L866.3,659.2 L866.6,661.8 L866.9,664.5 L867.4,667.1 L868.0,669.7 L868.7,672.3 L869.4,674.9 L870.3,677.5 L871.3,680.0 L872.3,682.5 L873.5,684.9 L874.8,687.4 L876.1,689.8 L877.6,692.1 L879.2,694.5 L880.9,696.8 L882.7,699.1 L884.6,701.4 L886.6,703.6 L888.6,705.8 L890.8,707.9 L893.0,710.0 L895.2,712.1 L897.6,714.1 L899.9,716.0 L902.4,717.9 L904.9,719.7 L907.4,721.4 L910.0,723.1 L912.7,724.7 L915.5,726.3 L918.4,727.8 L921.4,729.2 L924.4,730.6 L927.4,731.9 L930.5,733.1 L933.6,734.3 L936.8,735.4 L939.9,736.5 L943.0,737.5 L946.0,738.4 L949.0,739.3 L952.0,740.2 L954.9,740.9 L957.8,741.6 L960.6,742.3 L963.3,742.8 L966.0,743.3 L968.6,743.8 L971.3,744.1 L973.8,744.4 L976.4,744.7 L979.0,744.9 L981.5,745.0 L984.1,745.1 L986.7,745.2 L989.3,745.2 L991.9,745.2 L994.6,745.2 L997.4,745.2 L1000.3,745.2 L1003.5,745.1 L1006.9,744.9 L1010.5,744.7 L1014.2,744.4 L1018.1,744.1 L1021.9,743.7 L1025.8,743.4 L1029.6,743.0 L1033.4,742.6 L1037.0,742.2 L1040.4,741.8 L1043.6,741.5 L1046.5,741.1 L1049.1,740.8 L1051.3,740.6 L1053.1,740.4Z M967.4,631.0 a2.6,2.6 0 1,0 5.2,0 a2.6,2.6 0 1,0 -5.2,0Z"/><path d="M881.5,642.7 L880.1,642.3 L878.3,641.8 L876.3,641.2 L874.0,640.6 L871.4,639.8 L868.7,639.1 L865.8,638.3 L862.9,637.5 L859.9,636.8 L856.8,636.1 L853.9,635.4 L851.0,634.9 L848.2,634.4 L845.2,633.9 L842.2,633.3 L839.1,632.8 L835.9,632.4 L832.8,631.9 L829.6,631.5 L826.4,631.2 L823.3,631.0 L820.3,630.9 L817.4,630.9 L814.6,631.1 L812.0,631.4 L809.5,631.8 L807.1,632.3 L804.7,632.9 L802.4,633.6 L800.2,634.4 L798.1,635.3 L796.0,636.3 L794.1,637.5 L792.2,638.7 L790.4,640.1 L788.8,641.7 L787.2,643.4 L785.7,645.3 L784.3,647.3 L783.0,649.4 L781.9,651.6 L780.8,653.9 L779.9,656.2 L779.1,658.6 L778.5,661.0 L778.0,663.3 L777.7,665.7 L777.7,668.0 L777.8,670.3 L778.1,672.6 L778.6,675.0 L779.3,677.3 L780.2,679.6 L781.1,681.8 L782.2,684.0 L783.4,686.0 L784.8,688.0 L786.2,689.9 L787.7,691.6 L789.4,693.1 L791.3,694.4 L793.3,695.6 L795.4,696.6 L797.6,697.4 L799.8,698.1 L802.1,698.6 L804.4,699.1 L806.7,699.4 L809.0,699.6 L811.1,699.7 L813.2,699.8 L815.2,699.7 L817.2,699.5 L819.2,699.1 L821.1,698.7 L823.0,698.1 L824.9,697.4 L826.7,696.6 L828.4,695.7 L830.1,694.7 L831.6,693.7 L833.1,692.6 L834.4,691.4 L835.5,690.2 L836.6,688.8 L837.5,687.2 L838.2,685.6 L838.7,683.9 L839.2,682.2 L839.5,680.5 L839.6,678.8 L839.7,677.1 L839.7,675.5 L839.5,673.9 L839.3,672.5 L838.8,671.0 L838.2,669.6 L837.4,668.3 L836.4,667.2 L835.3,666.1 L834.1,665.2 L832.9,664.4 L831.6,663.6 L830.4,663.0 L829.1,662.4 L827.9,662.0 L826.7,661.6 L825.5,661.4 L824.2,661.3 L822.9,661.3 L821.7,661.5 L820.5,661.9 L819.3,662.3 L818.2,662.7 L817.1,663.3 L816.2,663.9 L815.3,664.5 L814.4,665.2 L813.7,665.9 L813.1,666.8 L812.6,667.9 L812.5,669.1 L812.6,670.2 L812.8,671.2 L813.1,672.1 L813.5,673.0 L813.9,673.8 L814.3,674.6 L814.7,675.2 L815.0,675.8 L815.3,676.2 L815.6,676.5 L818.4,675.5 L818.4,675.0 L818.2,674.4 L818.0,673.7 L817.8,673.0 L817.5,672.2 L817.3,671.5 L817.1,670.8 L816.9,670.2 L816.8,669.6 L816.9,669.3 L816.9,669.2 L816.9,669.2 L817.1,669.0 L817.5,668.7 L818.0,668.3 L818.7,668.0 L819.4,667.6 L820.2,667.3 L821.0,667.0 L821.8,666.7 L822.6,666.6 L823.4,666.5 L824.0,666.5 L824.5,666.6 L825.2,666.8 L826.0,667.1 L826.9,667.5 L827.9,668.0 L828.8,668.5 L829.7,669.1 L830.6,669.8 L831.4,670.5 L832.1,671.1 L832.6,671.8 L832.9,672.4 L833.2,673.0 L833.3,673.7 L833.4,674.7 L833.5,675.7 L833.5,676.9 L833.4,678.2 L833.2,679.5 L832.9,680.8 L832.5,682.0 L832.1,683.2 L831.6,684.2 L831.1,685.1 L830.5,685.8 L829.7,686.5 L828.8,687.3 L827.7,688.1 L826.5,688.8 L825.2,689.5 L823.8,690.2 L822.3,690.8 L820.8,691.3 L819.3,691.7 L817.8,692.0 L816.3,692.2 L814.8,692.3 L813.2,692.3 L811.5,692.3 L809.6,692.1 L807.7,691.9 L805.8,691.5 L803.9,691.1 L802.0,690.6 L800.2,690.0 L798.5,689.3 L797.0,688.6 L795.7,687.8 L794.6,686.9 L793.6,685.9 L792.5,684.7 L791.5,683.3 L790.5,681.7 L789.6,680.1 L788.8,678.3 L788.0,676.5 L787.4,674.7 L786.9,672.9 L786.6,671.2 L786.4,669.5 L786.3,668.0 L786.4,666.5 L786.7,664.8 L787.1,663.0 L787.6,661.2 L788.3,659.3 L789.1,657.5 L789.9,655.7 L790.9,653.9 L791.9,652.3 L793.0,650.8 L794.1,649.5 L795.2,648.3 L796.4,647.3 L797.7,646.3 L799.0,645.5 L800.5,644.6 L802.0,643.9 L803.6,643.3 L805.4,642.7 L807.2,642.2 L809.1,641.7 L811.1,641.4 L813.2,641.1 L815.4,640.9 L817.6,640.8 L820.1,640.8 L822.7,641.0 L825.5,641.2 L828.4,641.5 L831.4,642.0 L834.4,642.4 L837.4,642.9 L840.4,643.5 L843.4,644.0 L846.3,644.6 L849.0,645.1 L851.7,645.7 L854.4,646.3 L857.3,647.1 L860.1,647.8 L862.9,648.6 L865.7,649.4 L868.4,650.2 L870.9,651.0 L873.2,651.7 L875.2,652.3 L877.1,652.9 L878.5,653.3Z M814.9,676.0 a2.1,2.1 0 1,0 4.2,0 a2.1,2.1 0 1,0 -4.2,0Z"/><path d="M1012.3,736.4 L1011.6,736.9 L1010.8,737.5 L1009.6,738.3 L1008.3,739.2 L1006.9,740.2 L1005.4,741.3 L1003.8,742.5 L1002.2,743.7 L1000.7,745.0 L999.2,746.4 L997.8,747.9 L996.6,749.4 L995.6,750.9 L994.6,752.4 L993.6,753.9 L992.7,755.6 L991.9,757.3 L991.1,759.0 L990.4,760.8 L989.8,762.7 L989.3,764.5 L989.0,766.5 L988.9,768.4 L989.0,770.3 L989.2,772.2 L989.7,774.1 L990.3,776.0 L991.1,777.9 L992.0,779.7 L993.0,781.4 L994.1,783.1 L995.3,784.8 L996.6,786.3 L997.9,787.7 L999.3,789.0 L1000.9,790.1 L1002.5,791.1 L1004.2,791.9 L1006.0,792.6 L1007.9,793.1 L1009.8,793.6 L1011.7,793.9 L1013.7,794.1 L1015.6,794.2 L1017.5,794.1 L1019.3,794.0 L1021.1,793.8 L1022.8,793.4 L1024.6,792.9 L1026.2,792.2 L1027.9,791.3 L1029.4,790.4 L1030.9,789.3 L1032.4,788.2 L1033.7,787.0 L1035.0,785.7 L1036.1,784.4 L1037.2,783.1 L1038.1,781.8 L1038.8,780.5 L1039.5,779.0 L1039.9,777.5 L1040.1,775.9 L1040.2,774.4 L1040.2,772.8 L1040.1,771.3 L1039.9,769.8 L1039.5,768.4 L1039.1,767.0 L1038.7,765.8 L1038.1,764.6 L1037.4,763.4 L1036.6,762.3 L1035.6,761.4 L1034.6,760.6 L1033.4,759.8 L1032.2,759.2 L1031.0,758.7 L1029.8,758.2 L1028.5,757.9 L1027.3,757.6 L1026.1,757.4 L1024.9,757.4 L1023.7,757.4 L1022.5,757.7 L1021.3,758.2 L1020.2,758.8 L1019.2,759.5 L1018.3,760.2 L1017.4,761.1 L1016.6,761.9 L1015.9,762.8 L1015.2,763.7 L1014.7,764.6 L1014.2,765.4 L1013.9,766.4 L1013.8,767.6 L1014.0,768.7 L1014.4,769.6 L1014.9,770.4 L1015.4,771.1 L1016.0,771.8 L1016.6,772.3 L1017.2,772.8 L1017.7,773.2 L1018.2,773.6 L1018.5,773.8 L1018.8,773.9 L1021.2,772.1 L1021.0,771.6 L1020.7,771.1 L1020.3,770.6 L1019.8,770.1 L1019.4,769.6 L1019.0,769.1 L1018.6,768.6 L1018.3,768.2 L1018.1,767.8 L1018.1,767.6 L1018.1,767.5 L1018.1,767.6 L1018.2,767.4 L1018.5,766.9 L1018.9,766.4 L1019.4,765.8 L1020.0,765.2 L1020.7,764.6 L1021.4,764.0 L1022.1,763.5 L1022.8,763.1 L1023.4,762.8 L1023.9,762.6 L1024.3,762.6 L1024.8,762.6 L1025.5,762.6 L1026.2,762.8 L1027.1,763.0 L1028.0,763.3 L1028.9,763.7 L1029.7,764.1 L1030.5,764.6 L1031.2,765.1 L1031.8,765.6 L1032.2,766.1 L1032.6,766.6 L1032.9,767.2 L1033.2,767.9 L1033.5,768.8 L1033.7,769.8 L1033.9,770.9 L1034.0,771.9 L1034.1,773.0 L1034.1,774.1 L1033.9,775.1 L1033.8,776.0 L1033.5,776.8 L1033.2,777.5 L1032.7,778.3 L1032.0,779.2 L1031.2,780.1 L1030.3,781.1 L1029.3,782.0 L1028.1,783.0 L1027.0,783.8 L1025.8,784.6 L1024.6,785.3 L1023.4,785.9 L1022.2,786.3 L1021.2,786.6 L1020.0,786.8 L1018.7,786.9 L1017.3,787.0 L1015.8,787.0 L1014.3,786.8 L1012.8,786.6 L1011.3,786.3 L1009.8,786.0 L1008.4,785.5 L1007.2,785.0 L1006.1,784.5 L1005.1,783.9 L1004.3,783.2 L1003.3,782.3 L1002.4,781.2 L1001.5,780.1 L1000.6,778.8 L999.8,777.4 L999.0,776.1 L998.4,774.7 L997.9,773.3 L997.4,772.0 L997.2,770.7 L997.0,769.7 L997.0,768.6 L997.2,767.5 L997.4,766.3 L997.7,765.0 L998.2,763.7 L998.8,762.3 L999.4,761.0 L1000.2,759.6 L1000.9,758.3 L1001.8,757.0 L1002.6,755.7 L1003.4,754.6 L1004.2,753.6 L1005.2,752.6 L1006.4,751.6 L1007.7,750.5 L1009.1,749.5 L1010.5,748.5 L1011.9,747.5 L1013.3,746.6 L1014.6,745.7 L1015.8,744.9 L1016.9,744.2 L1017.7,743.6Z M1017.9,773.0 a2.1,2.1 0 1,0 4.2,0 a2.1,2.1 0 1,0 -4.2,0Z"/><path d="M889.6,363.3 L890.6,364.6 L891.8,366.1 L893.3,367.9 L894.9,369.9 L896.7,372.1 L898.6,374.4 L900.5,376.9 L902.4,379.5 L904.2,382.2 L906.0,384.9 L907.7,387.7 L909.1,390.5 L910.4,393.3 L911.7,396.2 L912.9,399.3 L914.0,402.4 L915.1,405.6 L916.1,409.0 L917.2,412.4 L918.2,415.9 L919.2,419.4 L920.3,423.0 L921.3,426.7 L922.4,430.5 L923.5,434.3 L924.5,438.3 L925.6,442.5 L926.5,446.7 L927.5,451.1 L928.5,455.5 L929.6,459.9 L930.7,464.3 L931.8,468.6 L933.0,472.8 L934.3,476.9 L935.8,480.9 L937.2,484.6 L938.7,488.3 L940.1,492.0 L941.7,495.5 L943.3,499.1 L944.9,502.5 L946.7,505.9 L948.6,509.3 L950.6,512.6 L952.8,515.8 L955.1,518.9 L957.7,522.0 L960.4,525.1 L963.4,528.1 L966.5,531.1 L969.8,534.0 L973.1,536.8 L976.6,539.5 L980.2,542.2 L983.8,544.7 L987.4,547.1 L991.1,549.4 L994.7,551.5 L998.3,553.4 L1002.1,555.3 L1006.1,556.9 L1010.3,558.4 L1014.6,559.7 L1018.9,560.9 L1023.0,562.0 L1027.1,562.9 L1030.9,563.8 L1034.3,564.6 L1037.4,565.2 L1039.9,565.8 L1041.9,566.4 L1044.1,557.6 L1041.9,557.1 L1039.2,556.6 L1036.1,556.0 L1032.6,555.3 L1028.9,554.6 L1025.0,553.8 L1020.9,552.9 L1016.8,551.8 L1012.8,550.7 L1008.8,549.5 L1005.1,548.1 L1001.7,546.6 L998.3,544.8 L994.8,542.9 L991.3,540.9 L987.8,538.7 L984.2,536.4 L980.7,534.0 L977.3,531.4 L974.0,528.9 L970.8,526.2 L967.8,523.5 L965.0,520.7 L962.3,518.0 L959.9,515.2 L957.6,512.3 L955.5,509.3 L953.5,506.3 L951.6,503.2 L949.8,500.0 L948.1,496.7 L946.5,493.3 L944.9,489.9 L943.3,486.4 L941.8,482.8 L940.2,479.1 L938.8,475.4 L937.4,471.4 L936.1,467.3 L934.8,463.1 L933.6,458.8 L932.5,454.5 L931.3,450.2 L930.2,445.8 L929.1,441.6 L927.9,437.4 L926.8,433.4 L925.6,429.5 L924.4,425.8 L923.2,422.2 L922.0,418.6 L920.9,415.0 L919.8,411.6 L918.6,408.2 L917.4,404.8 L916.2,401.6 L915.0,398.4 L913.7,395.4 L912.3,392.4 L910.9,389.5 L909.3,386.7 L907.5,383.9 L905.7,381.2 L903.7,378.6 L901.7,376.0 L899.7,373.6 L897.7,371.3 L895.9,369.1 L894.2,367.2 L892.7,365.4 L891.4,363.9 L890.4,362.7Z M1037.9,562.0 a5.1,5.1 0 1,0 10.2,0 a5.1,5.1 0 1,0 -10.2,0Z"/><path d="M1096.5,482.2 L1095.7,481.2 L1094.7,479.9 L1093.6,478.4 L1092.2,476.6 L1090.8,474.6 L1089.2,472.6 L1087.5,470.4 L1085.7,468.3 L1083.8,466.2 L1081.8,464.2 L1079.7,462.3 L1077.6,460.6 L1075.5,459.1 L1073.4,457.7 L1071.2,456.2 L1068.8,454.9 L1066.4,453.5 L1064.0,452.3 L1061.5,451.1 L1058.9,450.1 L1056.3,449.2 L1053.7,448.4 L1051.1,447.8 L1048.5,447.5 L1045.8,447.3 L1043.2,447.3 L1040.5,447.4 L1037.7,447.7 L1035.0,448.1 L1032.3,448.7 L1029.7,449.4 L1027.1,450.2 L1024.6,451.2 L1022.2,452.3 L1019.9,453.5 L1017.8,454.9 L1015.8,456.5 L1013.9,458.3 L1012.1,460.2 L1010.4,462.3 L1008.8,464.5 L1007.4,466.8 L1006.1,469.1 L1004.9,471.5 L1003.9,473.8 L1003.1,476.1 L1002.6,478.4 L1002.2,480.6 L1002.1,482.9 L1002.4,485.1 L1002.9,487.3 L1003.6,489.4 L1004.5,491.4 L1005.5,493.3 L1006.6,495.1 L1007.8,496.8 L1009.0,498.4 L1010.3,499.9 L1011.5,501.2 L1012.8,502.4 L1014.1,503.5 L1015.6,504.5 L1017.1,505.4 L1018.6,506.1 L1020.2,506.6 L1021.8,507.1 L1023.4,507.4 L1025.0,507.7 L1026.6,507.9 L1028.1,508.0 L1029.6,508.1 L1031.0,508.1 L1032.6,508.0 L1034.1,507.8 L1035.7,507.5 L1037.2,507.1 L1038.7,506.7 L1040.2,506.2 L1041.6,505.6 L1043.0,505.0 L1044.3,504.4 L1045.5,503.7 L1046.6,503.0 L1047.6,502.3 L1048.6,501.6 L1049.5,500.8 L1050.3,499.9 L1051.0,499.0 L1051.7,498.1 L1052.2,497.1 L1052.7,496.1 L1053.1,495.1 L1053.4,494.0 L1053.6,493.0 L1053.7,491.9 L1053.7,490.8 L1053.5,489.7 L1053.2,488.5 L1052.8,487.4 L1052.3,486.4 L1051.7,485.3 L1051.0,484.3 L1050.3,483.3 L1049.6,482.4 L1048.8,481.6 L1048.0,480.8 L1047.2,480.1 L1046.3,479.5 L1045.4,478.9 L1044.4,478.6 L1043.4,478.3 L1042.4,478.1 L1041.4,478.0 L1040.4,478.0 L1039.4,478.0 L1038.4,478.1 L1037.5,478.2 L1036.7,478.4 L1035.8,478.7 L1035.0,479.0 L1034.2,479.5 L1033.5,480.1 L1033.0,480.8 L1032.5,481.5 L1032.1,482.3 L1031.8,483.0 L1031.5,483.8 L1031.3,484.5 L1031.2,485.2 L1031.1,485.9 L1031.0,486.6 L1031.1,487.3 L1031.4,488.2 L1031.9,488.9 L1032.5,489.4 L1033.1,489.7 L1033.7,489.9 L1034.2,490.1 L1034.8,490.2 L1035.3,490.3 L1035.7,490.4 L1036.0,490.4 L1036.3,490.4 L1036.5,490.4 L1037.5,487.6 L1037.3,487.4 L1036.9,487.2 L1036.5,487.1 L1036.1,486.9 L1035.8,486.8 L1035.4,486.7 L1035.1,486.5 L1034.8,486.4 L1034.7,486.3 L1034.7,486.3 L1034.8,486.4 L1034.9,486.7 L1034.9,486.7 L1035.0,486.4 L1035.1,486.0 L1035.2,485.6 L1035.4,485.1 L1035.6,484.7 L1035.8,484.2 L1036.1,483.8 L1036.4,483.5 L1036.6,483.2 L1036.8,483.1 L1037.0,483.0 L1037.3,482.9 L1037.7,482.8 L1038.3,482.7 L1038.9,482.6 L1039.6,482.6 L1040.3,482.6 L1041.0,482.7 L1041.6,482.8 L1042.3,482.9 L1042.8,483.1 L1043.3,483.3 L1043.7,483.5 L1044.1,483.9 L1044.6,484.4 L1045.1,484.9 L1045.7,485.6 L1046.2,486.3 L1046.7,487.1 L1047.2,487.9 L1047.6,488.7 L1047.9,489.5 L1048.2,490.1 L1048.3,490.7 L1048.3,491.2 L1048.3,491.6 L1048.2,492.2 L1048.1,492.7 L1047.9,493.3 L1047.7,493.9 L1047.4,494.5 L1047.0,495.0 L1046.6,495.6 L1046.1,496.2 L1045.6,496.7 L1045.0,497.2 L1044.4,497.7 L1043.6,498.1 L1042.7,498.7 L1041.7,499.2 L1040.6,499.7 L1039.4,500.1 L1038.2,500.6 L1036.9,501.0 L1035.7,501.3 L1034.4,501.6 L1033.2,501.8 L1032.1,501.9 L1031.0,501.9 L1029.8,501.9 L1028.5,501.8 L1027.3,501.7 L1026.0,501.5 L1024.7,501.2 L1023.5,500.9 L1022.3,500.5 L1021.1,500.1 L1020.0,499.6 L1019.0,499.0 L1018.1,498.3 L1017.2,497.6 L1016.3,496.6 L1015.3,495.5 L1014.3,494.2 L1013.3,492.9 L1012.3,491.4 L1011.4,490.0 L1010.7,488.4 L1010.0,486.9 L1009.6,485.4 L1009.3,484.0 L1009.1,482.7 L1009.2,481.4 L1009.5,480.0 L1010.0,478.3 L1010.6,476.5 L1011.5,474.6 L1012.5,472.6 L1013.7,470.6 L1014.9,468.7 L1016.3,466.9 L1017.7,465.1 L1019.2,463.6 L1020.7,462.2 L1022.2,461.1 L1023.8,460.1 L1025.6,459.2 L1027.5,458.3 L1029.6,457.6 L1031.8,456.9 L1034.1,456.4 L1036.4,455.9 L1038.7,455.6 L1041.0,455.4 L1043.3,455.3 L1045.5,455.4 L1047.5,455.5 L1049.6,455.9 L1051.6,456.4 L1053.7,457.0 L1055.9,457.8 L1058.1,458.7 L1060.3,459.8 L1062.4,460.9 L1064.6,462.1 L1066.7,463.4 L1068.7,464.8 L1070.6,466.1 L1072.4,467.4 L1074.0,468.8 L1075.7,470.3 L1077.4,472.1 L1079.0,474.0 L1080.6,476.0 L1082.2,478.0 L1083.7,480.0 L1085.1,481.9 L1086.4,483.7 L1087.6,485.3 L1088.6,486.7 L1089.5,487.8Z M1034.9,489.0 a2.1,2.1 0 1,0 4.2,0 a2.1,2.1 0 1,0 -4.2,0Z"/><path d="M1012.6,456.1 L1011.9,455.9 L1011.0,455.8 L1010.1,455.7 L1009.0,455.6 L1008.0,455.5 L1006.9,455.3 L1005.8,455.1 L1004.7,454.9 L1003.7,454.7 L1002.9,454.4 L1002.2,454.1 L1001.7,453.8 L1001.1,453.3 L1000.5,452.8 L999.9,452.1 L999.3,451.3 L998.7,450.5 L998.2,449.6 L997.7,448.8 L997.3,447.9 L997.0,447.1 L996.7,446.3 L996.6,445.6 L996.5,445.0 L996.6,444.5 L996.7,443.8 L996.9,443.1 L997.2,442.3 L997.6,441.5 L998.1,440.7 L998.6,439.9 L999.2,439.1 L999.8,438.4 L1000.3,437.8 L1000.9,437.3 L1001.3,436.9 L1001.8,436.6 L1002.3,436.3 L1002.8,436.1 L1003.4,435.9 L1004.1,435.7 L1004.8,435.6 L1005.4,435.6 L1006.1,435.5 L1006.7,435.6 L1007.3,435.7 L1007.8,435.8 L1008.2,435.9 L1008.5,436.1 L1008.9,436.3 L1009.3,436.7 L1009.8,437.1 L1010.2,437.6 L1010.6,438.2 L1011.0,438.7 L1011.4,439.3 L1011.7,439.9 L1011.9,440.4 L1012.1,440.9 L1012.2,441.3 L1012.2,441.5 L1012.2,441.9 L1012.1,442.3 L1012.0,442.7 L1011.8,443.2 L1011.6,443.7 L1011.4,444.1 L1011.1,444.6 L1010.8,444.9 L1010.6,445.3 L1010.3,445.5 L1010.2,445.6 L1010.1,445.7 L1010.0,445.7 L1009.7,445.8 L1009.4,445.8 L1009.0,445.7 L1008.6,445.7 L1008.2,445.6 L1007.8,445.5 L1007.5,445.4 L1007.3,445.2 L1007.1,445.1 L1007.1,445.2 L1007.2,445.4 L1007.2,445.4 L1007.2,445.3 L1007.2,445.0 L1007.2,444.7 L1007.3,444.4 L1007.5,444.0 L1007.6,443.6 L1007.7,443.3 L1007.8,442.9 L1007.9,442.6 L1007.9,442.3 L1006.1,441.7 L1005.9,441.8 L1005.8,442.0 L1005.6,442.3 L1005.4,442.7 L1005.2,443.1 L1005.0,443.5 L1004.8,444.0 L1004.7,444.4 L1004.5,444.9 L1004.5,445.5 L1004.6,446.2 L1004.9,446.8 L1005.3,447.3 L1005.8,447.6 L1006.2,447.9 L1006.8,448.1 L1007.3,448.4 L1007.9,448.6 L1008.5,448.7 L1009.1,448.8 L1009.8,448.9 L1010.5,448.8 L1011.2,448.7 L1011.8,448.4 L1012.4,448.0 L1012.9,447.6 L1013.3,447.1 L1013.8,446.6 L1014.2,446.0 L1014.6,445.3 L1015.0,444.7 L1015.3,443.9 L1015.6,443.2 L1015.8,442.4 L1015.8,441.6 L1015.8,440.7 L1015.7,439.9 L1015.4,439.2 L1015.1,438.4 L1014.8,437.6 L1014.3,436.8 L1013.9,436.0 L1013.3,435.2 L1012.8,434.5 L1012.1,433.8 L1011.4,433.1 L1010.7,432.6 L1009.8,432.1 L1009.0,431.8 L1008.1,431.5 L1007.2,431.4 L1006.3,431.3 L1005.3,431.2 L1004.4,431.3 L1003.4,431.4 L1002.4,431.5 L1001.4,431.8 L1000.5,432.2 L999.5,432.6 L998.7,433.1 L997.8,433.8 L997.1,434.5 L996.3,435.3 L995.5,436.1 L994.7,437.1 L994.0,438.1 L993.4,439.1 L992.8,440.2 L992.3,441.3 L991.9,442.5 L991.6,443.7 L991.5,445.0 L991.5,446.2 L991.7,447.5 L992.0,448.7 L992.5,449.9 L993.0,451.1 L993.5,452.2 L994.2,453.4 L994.9,454.5 L995.7,455.5 L996.5,456.5 L997.4,457.4 L998.3,458.2 L999.5,459.0 L1000.7,459.6 L1002.0,460.1 L1003.3,460.5 L1004.6,460.8 L1005.9,461.1 L1007.1,461.3 L1008.3,461.4 L1009.3,461.6 L1010.2,461.7 L1010.9,461.8 L1011.4,461.9Z M1005.4,442.0 a1.6,1.6 0 1,0 3.2,0 a1.6,1.6 0 1,0 -3.2,0Z"/><path d="M1292.1,737.0 L1293.0,737.0 L1294.0,736.9 L1295.2,736.8 L1296.5,736.7 L1297.8,736.6 L1299.3,736.5 L1300.7,736.4 L1302.1,736.4 L1303.5,736.4 L1304.9,736.4 L1306.1,736.5 L1307.2,736.6 L1308.3,736.8 L1309.5,737.1 L1310.6,737.4 L1311.8,737.7 L1313.0,738.1 L1314.2,738.5 L1315.3,738.9 L1316.4,739.4 L1317.5,739.9 L1318.5,740.5 L1319.5,741.0 L1320.5,741.6 L1321.4,742.3 L1322.4,743.0 L1323.4,743.8 L1324.3,744.6 L1325.2,745.5 L1326.1,746.4 L1327.0,747.3 L1327.8,748.2 L1328.5,749.2 L1329.2,750.1 L1329.8,751.0 L1330.4,752.0 L1330.9,752.9 L1331.4,753.9 L1331.9,754.9 L1332.3,755.8 L1332.6,756.8 L1332.9,757.7 L1333.1,758.6 L1333.3,759.6 L1333.4,760.5 L1333.4,761.4 L1333.4,762.3 L1333.3,763.3 L1333.0,764.3 L1332.7,765.5 L1332.3,766.8 L1331.8,768.1 L1331.2,769.4 L1330.6,770.8 L1329.9,772.1 L1329.2,773.3 L1328.4,774.5 L1327.5,775.6 L1326.7,776.5 L1325.8,777.3 L1324.9,778.1 L1323.8,778.8 L1322.6,779.5 L1321.2,780.2 L1319.8,780.8 L1318.4,781.3 L1316.9,781.8 L1315.4,782.2 L1314.0,782.5 L1312.6,782.7 L1311.2,782.9 L1310.0,783.0 L1308.9,783.0 L1307.7,782.8 L1306.5,782.6 L1305.2,782.3 L1304.0,781.9 L1302.8,781.4 L1301.6,780.9 L1300.4,780.3 L1299.3,779.7 L1298.3,779.1 L1297.5,778.5 L1296.7,778.0 L1296.1,777.5 L1295.6,776.9 L1295.1,776.3 L1294.7,775.6 L1294.3,774.9 L1294.0,774.2 L1293.7,773.5 L1293.5,772.8 L1293.4,772.1 L1293.3,771.5 L1293.3,770.9 L1293.3,770.5 L1293.4,770.1 L1293.6,769.6 L1293.9,769.1 L1294.3,768.5 L1294.8,767.8 L1295.4,767.2 L1296.0,766.7 L1296.6,766.1 L1297.2,765.7 L1297.7,765.3 L1298.2,765.1 L1298.4,765.0 L1298.4,765.0 L1298.5,765.0 L1298.8,765.1 L1299.2,765.3 L1299.7,765.6 L1300.2,766.0 L1300.7,766.4 L1301.2,766.9 L1301.6,767.3 L1302.1,767.7 L1302.5,768.1 L1302.9,768.4 L1305.1,765.6 L1304.9,765.4 L1304.6,765.1 L1304.2,764.7 L1303.8,764.2 L1303.3,763.7 L1302.7,763.1 L1302.1,762.6 L1301.4,762.0 L1300.6,761.5 L1299.7,761.2 L1298.7,760.9 L1297.6,761.0 L1296.6,761.3 L1295.8,761.6 L1294.9,762.1 L1294.1,762.7 L1293.2,763.3 L1292.4,764.0 L1291.6,764.8 L1290.8,765.6 L1290.1,766.5 L1289.5,767.4 L1289.0,768.5 L1288.7,769.5 L1288.5,770.6 L1288.5,771.6 L1288.6,772.7 L1288.7,773.7 L1289.0,774.8 L1289.3,775.9 L1289.7,777.0 L1290.2,778.1 L1290.8,779.1 L1291.6,780.2 L1292.4,781.1 L1293.3,782.0 L1294.3,782.8 L1295.3,783.6 L1296.5,784.4 L1297.7,785.2 L1299.1,785.9 L1300.5,786.6 L1302.0,787.2 L1303.5,787.8 L1305.1,788.3 L1306.7,788.7 L1308.3,788.9 L1310.0,789.0 L1311.6,789.0 L1313.3,788.9 L1315.0,788.7 L1316.8,788.3 L1318.6,787.9 L1320.4,787.5 L1322.1,786.9 L1323.9,786.2 L1325.6,785.5 L1327.2,784.6 L1328.7,783.7 L1330.2,782.7 L1331.5,781.5 L1332.8,780.2 L1334.0,778.8 L1335.1,777.3 L1336.1,775.8 L1337.0,774.2 L1337.9,772.6 L1338.6,771.0 L1339.3,769.4 L1339.9,767.8 L1340.4,766.3 L1340.7,764.7 L1341.0,763.2 L1341.2,761.7 L1341.2,760.1 L1341.1,758.7 L1340.9,757.2 L1340.6,755.8 L1340.2,754.4 L1339.8,753.1 L1339.3,751.8 L1338.8,750.5 L1338.2,749.3 L1337.6,748.0 L1336.9,746.8 L1336.1,745.5 L1335.3,744.2 L1334.4,743.0 L1333.4,741.8 L1332.4,740.6 L1331.3,739.5 L1330.2,738.4 L1329.1,737.3 L1327.9,736.3 L1326.7,735.3 L1325.5,734.4 L1324.3,733.5 L1323.0,732.7 L1321.6,732.0 L1320.3,731.3 L1318.9,730.6 L1317.5,730.0 L1316.1,729.4 L1314.6,728.9 L1313.2,728.5 L1311.8,728.1 L1310.3,727.7 L1308.8,727.4 L1307.2,727.1 L1305.5,726.9 L1303.8,726.8 L1302.2,726.7 L1300.5,726.7 L1298.9,726.8 L1297.3,726.8 L1295.9,726.9 L1294.6,726.9 L1293.5,727.0 L1292.6,727.0 L1291.9,727.0Z M1301.7,767.0 a2.4,2.4 0 1,0 4.7,0 a2.4,2.4 0 1,0 -4.7,0Z"/><path d="M1403.4,616.3 L1404.0,615.8 L1404.9,615.1 L1405.9,614.2 L1407.1,613.3 L1408.5,612.2 L1409.9,611.0 L1411.4,609.8 L1412.9,608.4 L1414.3,607.1 L1415.6,605.6 L1416.9,604.1 L1417.9,602.6 L1418.8,601.0 L1419.4,599.5 L1420.0,598.0 L1420.5,596.4 L1420.9,594.9 L1421.2,593.3 L1421.4,591.7 L1421.5,590.1 L1421.5,588.6 L1421.4,587.1 L1421.2,585.6 L1420.9,584.1 L1420.4,582.6 L1419.8,581.2 L1419.1,579.8 L1418.2,578.5 L1417.3,577.3 L1416.3,576.1 L1415.3,575.0 L1414.2,574.0 L1413.0,573.0 L1411.8,572.2 L1410.6,571.5 L1409.3,570.9 L1407.9,570.5 L1406.4,570.2 L1405.0,570.2 L1403.6,570.2 L1402.1,570.4 L1400.8,570.7 L1399.4,571.0 L1398.1,571.4 L1396.8,571.9 L1395.7,572.4 L1394.5,573.0 L1393.5,573.7 L1392.5,574.4 L1391.6,575.3 L1390.7,576.3 L1389.9,577.3 L1389.2,578.4 L1388.6,579.5 L1388.0,580.6 L1387.6,581.7 L1387.2,582.8 L1386.9,583.9 L1386.8,585.0 L1386.8,586.2 L1387.0,587.4 L1387.5,588.4 L1388.2,589.3 L1388.9,590.1 L1389.7,590.9 L1390.6,591.5 L1391.5,592.1 L1392.4,592.6 L1393.2,593.1 L1394.1,593.4 L1395.0,593.7 L1395.9,593.8 L1396.9,593.7 L1397.9,593.3 L1398.6,592.8 L1399.2,592.2 L1399.8,591.5 L1400.2,590.9 L1400.7,590.2 L1401.1,589.6 L1401.4,589.0 L1401.7,588.6 L1402.0,588.2 L1402.1,588.0 L1399.9,586.0 L1399.6,586.3 L1399.2,586.8 L1398.9,587.3 L1398.5,587.8 L1398.1,588.3 L1397.6,588.9 L1397.2,589.3 L1396.8,589.7 L1396.4,590.0 L1396.2,590.2 L1396.1,590.2 L1396.1,590.2 L1395.9,590.1 L1395.5,589.9 L1394.9,589.7 L1394.3,589.3 L1393.7,588.8 L1393.1,588.3 L1392.5,587.8 L1392.0,587.3 L1391.6,586.8 L1391.3,586.3 L1391.2,586.0 L1391.2,585.8 L1391.3,585.5 L1391.4,585.0 L1391.6,584.3 L1392.0,583.6 L1392.4,582.8 L1392.9,582.0 L1393.5,581.2 L1394.1,580.5 L1394.7,579.8 L1395.3,579.2 L1395.9,578.7 L1396.5,578.3 L1397.2,578.0 L1398.0,577.7 L1398.9,577.4 L1399.8,577.1 L1400.8,576.9 L1401.9,576.7 L1402.9,576.6 L1403.8,576.6 L1404.8,576.6 L1405.6,576.7 L1406.2,576.9 L1406.7,577.1 L1407.3,577.4 L1407.9,577.9 L1408.6,578.5 L1409.3,579.2 L1410.0,579.9 L1410.7,580.8 L1411.3,581.7 L1411.8,582.6 L1412.3,583.5 L1412.7,584.4 L1412.9,585.2 L1413.1,585.9 L1413.2,586.7 L1413.2,587.6 L1413.2,588.5 L1413.1,589.5 L1412.9,590.5 L1412.7,591.6 L1412.4,592.7 L1412.0,593.7 L1411.6,594.7 L1411.1,595.7 L1410.6,596.6 L1410.1,597.4 L1409.5,598.2 L1408.6,599.0 L1407.6,599.9 L1406.4,600.9 L1405.1,601.9 L1403.7,602.9 L1402.3,603.8 L1400.9,604.7 L1399.6,605.6 L1398.4,606.4 L1397.4,607.1 L1396.6,607.7Z M1398.9,587.0 a2.1,2.1 0 1,0 4.2,0 a2.1,2.1 0 1,0 -4.2,0Z"/></g>
<g fill="#d5e0ec"><path transform="translate(1102,354) rotate(14)" d="M0,-2.50 C-5.00,-10.00 -15.50,-22.00 -15.50,-34.50 A15.50,15.50 0 0,1 15.50,-34.50 C15.50,-22.00 5.00,-10.00 0,-2.50Z"/><path transform="translate(1102,354) rotate(91)" d="M0,-2.50 C-5.00,-10.00 -15.50,-22.00 -15.50,-34.50 A15.50,15.50 0 0,1 15.50,-34.50 C15.50,-22.00 5.00,-10.00 0,-2.50Z"/><path transform="translate(1102,354) rotate(163)" d="M0,-2.50 C-5.00,-10.00 -15.50,-22.00 -15.50,-34.50 A15.50,15.50 0 0,1 15.50,-34.50 C15.50,-22.00 5.00,-10.00 0,-2.50Z"/><path transform="translate(1102,354) rotate(237)" d="M0,-2.50 C-5.00,-10.00 -15.50,-22.00 -15.50,-34.50 A15.50,15.50 0 0,1 15.50,-34.50 C15.50,-22.00 5.00,-10.00 0,-2.50Z"/><path transform="translate(1102,354) rotate(296)" d="M0,-2.50 C-5.00,-10.00 -15.50,-22.00 -15.50,-34.50 A15.50,15.50 0 0,1 15.50,-34.50 C15.50,-22.00 5.00,-10.00 0,-2.50Z"/><circle cx="1102" cy="354" r="15.00"/></g><g fill="#2a62a6"><path transform="translate(1102,354) rotate(14)" d="M0,-4.00 L-3.98,-8.21 A5.50,5.50 0 1,1 3.98,-8.21Z"/><path transform="translate(1102,354) rotate(91)" d="M0,-4.00 L-3.98,-8.21 A5.50,5.50 0 1,1 3.98,-8.21Z"/><path transform="translate(1102,354) rotate(163)" d="M0,-4.00 L-3.98,-8.21 A5.50,5.50 0 1,1 3.98,-8.21Z"/><path transform="translate(1102,354) rotate(237)" d="M0,-4.00 L-3.98,-8.21 A5.50,5.50 0 1,1 3.98,-8.21Z"/><path transform="translate(1102,354) rotate(296)" d="M0,-4.00 L-3.98,-8.21 A5.50,5.50 0 1,1 3.98,-8.21Z"/></g>
<g fill="#d5e0ec"><path transform="translate(834,570) rotate(14)" d="M0,-2.30 C-4.60,-9.20 -14.26,-20.24 -14.26,-31.74 A14.26,14.26 0 0,1 14.26,-31.74 C14.26,-20.24 4.60,-9.20 0,-2.30Z"/><path transform="translate(834,570) rotate(91)" d="M0,-2.30 C-4.60,-9.20 -14.26,-20.24 -14.26,-31.74 A14.26,14.26 0 0,1 14.26,-31.74 C14.26,-20.24 4.60,-9.20 0,-2.30Z"/><path transform="translate(834,570) rotate(163)" d="M0,-2.30 C-4.60,-9.20 -14.26,-20.24 -14.26,-31.74 A14.26,14.26 0 0,1 14.26,-31.74 C14.26,-20.24 4.60,-9.20 0,-2.30Z"/><path transform="translate(834,570) rotate(237)" d="M0,-2.30 C-4.60,-9.20 -14.26,-20.24 -14.26,-31.74 A14.26,14.26 0 0,1 14.26,-31.74 C14.26,-20.24 4.60,-9.20 0,-2.30Z"/><path transform="translate(834,570) rotate(296)" d="M0,-2.30 C-4.60,-9.20 -14.26,-20.24 -14.26,-31.74 A14.26,14.26 0 0,1 14.26,-31.74 C14.26,-20.24 4.60,-9.20 0,-2.30Z"/><circle cx="834" cy="570" r="13.80"/></g><g fill="#2a62a6"><path transform="translate(834,570) rotate(14)" d="M0,-3.68 L-3.67,-7.56 A5.06,5.06 0 1,1 3.67,-7.56Z"/><path transform="translate(834,570) rotate(91)" d="M0,-3.68 L-3.67,-7.56 A5.06,5.06 0 1,1 3.67,-7.56Z"/><path transform="translate(834,570) rotate(163)" d="M0,-3.68 L-3.67,-7.56 A5.06,5.06 0 1,1 3.67,-7.56Z"/><path transform="translate(834,570) rotate(237)" d="M0,-3.68 L-3.67,-7.56 A5.06,5.06 0 1,1 3.67,-7.56Z"/><path transform="translate(834,570) rotate(296)" d="M0,-3.68 L-3.67,-7.56 A5.06,5.06 0 1,1 3.67,-7.56Z"/></g>
<g fill="#d5e0ec"><path transform="translate(1149,498) rotate(14)" d="M0,-1.40 C-2.80,-5.60 -8.68,-12.32 -8.68,-19.32 A8.68,8.68 0 0,1 8.68,-19.32 C8.68,-12.32 2.80,-5.60 0,-1.40Z"/><path transform="translate(1149,498) rotate(91)" d="M0,-1.40 C-2.80,-5.60 -8.68,-12.32 -8.68,-19.32 A8.68,8.68 0 0,1 8.68,-19.32 C8.68,-12.32 2.80,-5.60 0,-1.40Z"/><path transform="translate(1149,498) rotate(163)" d="M0,-1.40 C-2.80,-5.60 -8.68,-12.32 -8.68,-19.32 A8.68,8.68 0 0,1 8.68,-19.32 C8.68,-12.32 2.80,-5.60 0,-1.40Z"/><path transform="translate(1149,498) rotate(237)" d="M0,-1.40 C-2.80,-5.60 -8.68,-12.32 -8.68,-19.32 A8.68,8.68 0 0,1 8.68,-19.32 C8.68,-12.32 2.80,-5.60 0,-1.40Z"/><path transform="translate(1149,498) rotate(296)" d="M0,-1.40 C-2.80,-5.60 -8.68,-12.32 -8.68,-19.32 A8.68,8.68 0 0,1 8.68,-19.32 C8.68,-12.32 2.80,-5.60 0,-1.40Z"/><circle cx="1149" cy="498" r="8.40"/></g><g fill="#2a62a6"><path transform="translate(1149,498) rotate(14)" d="M0,-2.24 L-2.23,-4.60 A3.08,3.08 0 1,1 2.23,-4.60Z"/><path transform="translate(1149,498) rotate(91)" d="M0,-2.24 L-2.23,-4.60 A3.08,3.08 0 1,1 2.23,-4.60Z"/><path transform="translate(1149,498) rotate(163)" d="M0,-2.24 L-2.23,-4.60 A3.08,3.08 0 1,1 2.23,-4.60Z"/><path transform="translate(1149,498) rotate(237)" d="M0,-2.24 L-2.23,-4.60 A3.08,3.08 0 1,1 2.23,-4.60Z"/><path transform="translate(1149,498) rotate(296)" d="M0,-2.24 L-2.23,-4.60 A3.08,3.08 0 1,1 2.23,-4.60Z"/></g>
<g fill="#d5e0ec"><path transform="translate(984,470) rotate(14)" d="M0,-0.65 C-1.30,-2.60 -4.03,-5.72 -4.03,-8.97 A4.03,4.03 0 0,1 4.03,-8.97 C4.03,-5.72 1.30,-2.60 0,-0.65Z"/><path transform="translate(984,470) rotate(91)" d="M0,-0.65 C-1.30,-2.60 -4.03,-5.72 -4.03,-8.97 A4.03,4.03 0 0,1 4.03,-8.97 C4.03,-5.72 1.30,-2.60 0,-0.65Z"/><path transform="translate(984,470) rotate(163)" d="M0,-0.65 C-1.30,-2.60 -4.03,-5.72 -4.03,-8.97 A4.03,4.03 0 0,1 4.03,-8.97 C4.03,-5.72 1.30,-2.60 0,-0.65Z"/><path transform="translate(984,470) rotate(237)" d="M0,-0.65 C-1.30,-2.60 -4.03,-5.72 -4.03,-8.97 A4.03,4.03 0 0,1 4.03,-8.97 C4.03,-5.72 1.30,-2.60 0,-0.65Z"/><path transform="translate(984,470) rotate(296)" d="M0,-0.65 C-1.30,-2.60 -4.03,-5.72 -4.03,-8.97 A4.03,4.03 0 0,1 4.03,-8.97 C4.03,-5.72 1.30,-2.60 0,-0.65Z"/><circle cx="984" cy="470" r="3.90"/></g><g fill="#2a62a6"><path transform="translate(984,470) rotate(14)" d="M0,-1.04 L-1.04,-2.14 A1.43,1.43 0 1,1 1.04,-2.14Z"/><path transform="translate(984,470) rotate(91)" d="M0,-1.04 L-1.04,-2.14 A1.43,1.43 0 1,1 1.04,-2.14Z"/><path transform="translate(984,470) rotate(163)" d="M0,-1.04 L-1.04,-2.14 A1.43,1.43 0 1,1 1.04,-2.14Z"/><path transform="translate(984,470) rotate(237)" d="M0,-1.04 L-1.04,-2.14 A1.43,1.43 0 1,1 1.04,-2.14Z"/><path transform="translate(984,470) rotate(296)" d="M0,-1.04 L-1.04,-2.14 A1.43,1.43 0 1,1 1.04,-2.14Z"/></g>
</svg>

<div id="toppanel">
  <div class="abs" style="left:0;top:0;width:116px;height:24px;background:linear-gradient(#63a0dc,#3f7ec3);border-top:1px solid #3f6ea8"></div>
  <svg class="ic" style="left:7px;top:2px;width:20px;height:20px" viewBox="0 0 20 20"><use href="#i-fedora"/></svg>
  <div class="ptxt" style="left:32px;color:#fff">Applications</div>
  <div class="ptxt" style="left:123px">Places</div>
  <div class="ptxt" style="left:178px">System</div>
  <svg class="ic" style="left:234px;top:2px;width:22px;height:21px" viewBox="0 0 24 24"><use href="#i-konq"/></svg>
  <svg class="ic" style="left:257px;top:2px;width:22px;height:21px" viewBox="0 0 24 24"><use href="#i-mail"/></svg>
  <svg class="ic" style="left:281px;top:2px;width:23px;height:22px" viewBox="0 0 24 24"><use href="#i-writer"/></svg>
  <svg class="ic" style="left:305px;top:2px;width:22px;height:22px" viewBox="0 0 24 24"><use href="#i-impress"/></svg>
  <svg class="ic" style="left:330px;top:1px;width:23px;height:22px" viewBox="0 0 24 24"><use href="#i-calc"/></svg>
  <!-- system monitor -->
  <div class="abs" style="left:965px;top:1px;width:43px;height:23px;border:1px dotted #333"></div>
  <div class="abs" style="left:967px;top:2px;width:39px;height:21px;border:1px solid #b9ad98;background:#f4f1ec"></div>
  <svg class="ic" style="left:969px;top:3px;width:35px;height:18px" viewBox="0 0 35 18"><rect width="35" height="18" fill="#000"/><rect x="0" y="12" width="2" height="6" fill="#1b80d0"/><rect x="4" y="7" width="2" height="11" fill="#1b80d0"/><rect x="6" y="6" width="2" height="12" fill="#1b80d0"/><rect x="8" y="11" width="1" height="7" fill="#1b80d0"/><rect x="9" y="14.5" width="2" height="3.5" fill="#1b80d0"/><rect x="11" y="16" width="2" height="2" fill="#1b80d0"/><rect x="14" y="11" width="1" height="7" fill="#1b80d0"/><rect x="15" y="13" width="2" height="5" fill="#1b80d0"/><rect x="17" y="15" width="2" height="3" fill="#1b80d0"/><rect x="19" y="16.5" width="2" height="1.5" fill="#1b80d0"/><rect x="22" y="16" width="2" height="2" fill="#1b80d0"/><rect x="26" y="15" width="2" height="3" fill="#1b80d0"/><rect x="30" y="11.5" width="1" height="6.5" fill="#1b80d0"/><rect x="31" y="16" width="2" height="2" fill="#1b80d0"/><rect x="34" y="14" width="1" height="4" fill="#1b80d0"/></svg>
  <!-- cpu temp -->
  <svg class="ic" style="left:1010px;top:2px;width:23px;height:20px" viewBox="0 0 23 20"><rect x="1" y="3" width="15" height="15" rx="2" fill="#bdbdbd" stroke="#666" stroke-width="1" stroke-dasharray="1.5 1"/><rect x="3" y="5" width="11" height="11" fill="#a9a9a9"/><path d="M5 8h6M5 10h6M5 12h6" stroke="#d0d0d0" stroke-width="0.8"/><rect x="15" y="1" width="7" height="18" rx="1" fill="#fff" stroke="#888" stroke-width="0.8"/><rect x="15.5" y="7" width="6" height="12" rx="1" fill="#d81818" stroke="#8a0a0a" stroke-width="0.8"/></svg>
  <div class="ptxt" style="left:1034px">52°C</div>
  <svg class="ic" style="left:1067px;top:4px;width:18px;height:14px" viewBox="0 0 18 14"><path d="M0 7h3c1 0 1-5 2-5s1 10 2 10s1-10 2-10s1 10 2 10s1-5 2-5h4" fill="none" stroke="#f09040" stroke-width="1.4"/></svg>
  <svg class="ic" style="left:1088px;top:8px;width:11px;height:10px" viewBox="0 0 11 10"><path d="M1 1h9l-4.5 4z M1 5h9l-4.5 4z" fill="#222"/></svg>
  <div class="ptxt" style="left:1101px">107 B/s</div>
  <svg class="ic" style="left:1167px;top:8px;width:11px;height:10px" viewBox="0 0 11 10"><path d="M1 9h9l-4.5-4z M1 5h9l-4.5-4z" fill="#222"/></svg>
  <div class="ptxt" style="left:1181px">20 B/s</div>
  <div class="abs handle" style="left:1247px;top:1px;width:6px;height:22px"></div>
  <!-- tray -->
  <svg class="ic" style="left:1259px;top:1px;width:18px;height:21px" viewBox="0 0 18 21"><ellipse cx="9" cy="10.5" rx="8" ry="10" fill="#1b3550" stroke="#0c1a2a" stroke-width="1"/><ellipse cx="7" cy="7" rx="4" ry="5" fill="#3d5f85" opacity="0.6"/><path d="M5 7l7 6l-3.5 3v-11l3.5 3l-7 6" fill="none" stroke="#fff" stroke-width="1.6"/></svg>
  <svg class="ic" style="left:1281px;top:2px;width:22px;height:20px" viewBox="0 0 22 20"><path d="M1 1h15v11h-8l-4 4v-4h-3z" fill="#eef4fb" stroke="#6f9ad0" stroke-width="1"/><circle cx="14.5" cy="13" r="6.5" fill="url(#g-green)" stroke="#4e9a2a" stroke-width="1"/></svg>
  <svg class="ic" style="left:1304px;top:2px;width:19px;height:19px" viewBox="0 0 19 19"><ellipse cx="8" cy="3" rx="5" ry="2" fill="#555"/><rect x="3" y="3" width="10" height="13" fill="#4fae2a"/><rect x="4" y="4" width="3" height="11" fill="#9be06a"/><ellipse cx="8" cy="16" rx="5" ry="2" fill="#3a8a1a"/><ellipse cx="14" cy="14" rx="4.5" ry="3.5" fill="#7c8890" stroke="#444" stroke-width="0.8"/></svg>
  <svg class="ic" style="left:1328px;top:1px;width:17px;height:21px" viewBox="0 0 17 21"><path d="M8.5 1c2 2 5 2 7 1c1 6 1 13-7 18c-8-5-8-12-7-18c2 1 5 1 7-1z" fill="#e8b020" stroke="#a87808" stroke-width="1"/><path d="M8.5 4c1.5 1 3 1.5 4.5 1c0 4 0 9-4.5 12" fill="#f6d860" opacity="0.8"/></svg>
  <div class="ptxt" style="left:1352px">12:59 PM</div>
  <svg class="ic" style="left:1416px;top:2px;width:23px;height:19px" viewBox="0 0 23 19"><path d="M1 6h4l6-5v17l-6-5h-4z" fill="#c8c8c8" stroke="#333" stroke-width="1"/><path d="M14 5c2 2 2 7 0 9M17 3c3 3 3 10 0 13M20 1c4 4 4 13 0 17" fill="none" stroke="#1b3a8a" stroke-width="1.6"/></svg>
</div>

<div class="menu" style="left:0;top:24px;width:185px;height:277px">
  <div class="mi" style="top:1px"><svg class="ic" viewBox="0 0 24 24"><use href="#i-acc"/></svg><div class="t">Accessories</div><div class="arr"></div></div>
  <div class="mi" style="top:30px"><svg class="ic" viewBox="0 0 24 24"><use href="#i-games"/></svg><div class="t">Games</div><div class="arr"></div></div>
  <div class="mi" style="top:59px"><svg class="ic" viewBox="0 0 24 24"><use href="#i-graphics"/></svg><div class="t">Graphics</div><div class="arr"></div></div>
  <div class="mi sel" style="top:88px;left:1px;width:182px"><svg class="ic" style="left:5px;top:1px" viewBox="0 0 24 24"><use href="#i-plug"/></svg><div class="t" style="left:34px;top:4px">Internet</div><div class="arr" style="right:4px;top:9px"></div></div>
  <div class="mi" style="top:117px"><svg class="ic" viewBox="0 0 24 24"><use href="#i-office"/></svg><div class="t">Office</div><div class="arr"></div></div>
  <div class="mi" style="top:146px"><svg class="ic" viewBox="0 0 24 24"><use href="#i-prog"/></svg><div class="t">Programming</div><div class="arr"></div></div>
  <div class="mi" style="top:175px"><svg class="ic" viewBox="0 0 24 24"><use href="#i-sound"/></svg><div class="t">Sound &amp; Video</div><div class="arr"></div></div>
  <div class="mi" style="top:204px"><svg class="ic" viewBox="0 0 24 24"><use href="#i-systools"/></svg><div class="t">System Tools</div><div class="arr"></div></div>
  <div class="abs" style="left:6px;top:237px;width:172px;height:2px;border-top:1px solid #c9c4bb;border-bottom:1px solid #fff"></div>
  <div class="mi" style="top:245px"><svg class="ic" viewBox="0 0 24 24"><use href="#i-addrem"/></svg><div class="t">Add/Remove Software</div></div>
</div>
<div class="menu" style="left:184px;top:128px;width:314px;height:596px;border-top:0">
  <div class="mi" style="top:-15px"><svg class="ic" viewBox="0 0 24 24"><use href="#i-plug"/></svg><div class="t">Airsnort Wireless Sniffer</div></div>
  <div class="mi" style="top:14px"><div class="t">aMSN</div></div>
  <div class="mi" style="top:43px"><svg class="ic" viewBox="0 0 24 24"><use href="#i-bt"/></svg><div class="t">BitTorrent Transfer Tool</div></div>
  <div class="mi" style="top:72px"><div class="t">BloGTK Weblog Editor</div></div>
  <div class="mi" style="top:101px"><svg class="ic" viewBox="0 0 24 24"><use href="#i-ape"/></svg><div class="t">EtherApe</div></div>
  <div class="mi" style="top:130px"><svg class="ic" viewBox="0 0 24 24"><use href="#i-ff"/></svg><div class="t">Firefox Web Browser</div></div>
  <div class="mi" style="top:159px"><svg class="ic" viewBox="0 0 24 24"><use href="#i-gftp"/></svg><div class="t">gFTP</div></div>
  <div class="mi" style="top:188px"><svg class="ic" viewBox="0 0 24 24"><use href="#i-grsync"/></svg><div class="t">Grsync</div></div>
  <div class="mi" style="top:217px"><svg class="ic" viewBox="0 0 24 24"><use href="#i-gspoof"/></svg><div class="t">Gspoof</div></div>
  <div class="mi" style="top:246px"><svg class="ic" viewBox="0 0 24 24"><use href="#i-pidgin"/></svg><div class="t">Internet Messenger</div></div>
  <div class="mi" style="top:275px"><svg class="ic" viewBox="0 0 24 24"><use href="#i-voip"/></svg><div class="t">IP Telephony, VoIP and Video Conferencing</div></div>
  <div class="mi" style="top:304px"><svg class="ic" viewBox="0 0 24 24"><use href="#i-irc"/></svg><div class="t">IRC</div></div>
  <div class="mi" style="top:333px"><svg class="ic" viewBox="0 0 24 24"><use href="#i-konq"/></svg><div class="t">Konqueror</div></div>
  <div class="mi" style="top:362px"><svg class="ic" viewBox="0 0 24 24"><use href="#i-plug"/></svg><div class="t">NmapFE</div></div>
  <div class="mi" style="top:391px"><svg class="ic" viewBox="0 0 24 24"><use href="#i-opera"/></svg><div class="t">Opera</div></div>
  <div class="mi" style="top:420px"><svg class="ic" viewBox="0 0 24 24"><use href="#i-putty"/></svg><div class="t">Putty Terminal Client</div></div>
  <div class="mi" style="top:449px"><svg class="ic" viewBox="0 0 24 24"><use href="#i-seamonkey"/></svg><div class="t">SeaMonkey</div></div>
  <div class="mi" style="top:478px"><svg class="ic" viewBox="0 0 24 24"><use href="#i-skype"/></svg><div class="t">Skype</div></div>
  <div class="mi" style="top:507px"><svg class="ic" viewBox="0 0 24 24"><use href="#i-tsc"/></svg><div class="t">Terminal Server Client</div></div>
  <div class="mi" style="top:536px"><svg class="ic" viewBox="0 0 24 24"><use href="#i-tbird"/></svg><div class="t">Thunderbird Email</div></div>
  <div class="mi" style="top:565px"><svg class="ic" viewBox="0 0 24 24"><use href="#i-wshark"/></svg><div class="t">Wireshark Network Analyzer</div></div>
</div>

<div class="abs" style="left:1175px;top:28px;width:260px;height:434px;background:#edeae5;border:1px solid #202a36;border-top-color:#111">
  <!-- title bar -->
  <div class="abs" style="left:0;top:0;width:258px;height:23px;background:linear-gradient(#69a6e2,#4d8ed2 50%,#3f7dc2);border-bottom:1px solid #2d5f98"></div>
  <svg class="ic" style="left:6px;top:3px;width:16px;height:16px" viewBox="0 0 24 24"><use href="#i-pidgin"/></svg>
  <div class="abs gt" style="left:70px;top:2px;font-weight:bold;font-size:14px;letter-spacing:0.5px;color:#fff;line-height:18px;text-shadow:1px 1px 1px #1e3f66;white-space:nowrap">Buddy List</div>
  <div class="abs tbtn" style="left:196px;top:2px"><div class="abs" style="left:5px;top:10px;width:8px;height:3px;background:#fff"></div></div>
  <div class="abs tbtn" style="left:216px;top:2px"><div class="abs" style="left:4px;top:4px;width:9px;height:9px;border:2px solid #fff;border-top-width:2px"></div></div>
  <div class="abs tbtn" style="left:236px;top:2px"><svg class="ic" style="left:3px;top:3px;width:11px;height:11px" viewBox="0 0 11 11"><path d="M1.5 1.5l8 8M9.5 1.5l-8 8" stroke="#fff" stroke-width="2.4"/></svg></div>
  <!-- menubar -->
  <div class="abs mb" style="left:12px"><u>B</u>uddies</div>
  <div class="abs mb" style="left:76px"><u>A</u>ccounts</div>
  <div class="abs mb" style="left:150px"><u>T</u>ools</div>
  <div class="abs mb" style="left:196px"><u>H</u>elp</div>
  <!-- tree -->
  <div class="abs" style="left:4px;top:48px;width:250px;height:341px;background:#fff;border-bottom:1px solid #bdb7ae;overflow:hidden">
    <div class="bl-row" style="top:0;height:22px;background:linear-gradient(#a49b8c,#8a8170);color:#fff"><svg class="ic" style="left:5px;top:4px;width:9px;height:13px" viewBox="0 0 9 13"><path d="M1.5 1.5l6 5l-6 5z" fill="#fff" stroke="#000" stroke-width="1.3"/></svg><div class="t"><b>Friends</b> (1/1)</div></div>
    <div class="bl-row" style="top:22px"><svg class="ic" style="left:5px;top:4px;width:9px;height:13px" viewBox="0 0 9 13"><path d="M1.5 1.5l6 5l-6 5z" fill="#fff" stroke="#000" stroke-width="1.3" stroke-linejoin="miter"/></svg><div class="t"><b>Tsun@mi^te@m</b> (1/7)</div></div>
    <div class="bl-row" style="top:44px"><svg class="ic" style="left:2px;top:7px;width:13px;height:9px" viewBox="0 0 13 9"><path d="M1.5 1.5h10l-5 6z" fill="#fff" stroke="#000" stroke-width="1.3"/></svg><div class="t"><b>-=[Hawk|EYE]=-</b></div></div>
    <div class="abs" style="left:0;top:64px;width:250px;height:1px;background:#d0cdc8"></div>
    <div class="bl-row" style="top:65px"><div class="dot"></div><div class="t" style="left:29px">Namran Hussin namran@techs...</div></div>
    <div class="bl-row" style="top:86px"><div class="dot"></div><div class="t" style="left:29px">namran.net</div></div>
    <div class="bl-row" style="top:108px"><svg class="ic" style="left:5px;top:4px;width:9px;height:13px" viewBox="0 0 9 13"><path d="M1.5 1.5l6 5l-6 5z" fill="#fff" stroke="#000" stroke-width="1.3" stroke-linejoin="miter"/></svg><div class="t"><b>kjc</b> (1/5)</div></div>
    <div class="bl-row" style="top:130px"><svg class="ic" style="left:5px;top:4px;width:9px;height:13px" viewBox="0 0 9 13"><path d="M1.5 1.5l6 5l-6 5z" fill="#fff" stroke="#000" stroke-width="1.3" stroke-linejoin="miter"/></svg><div class="t"><b>Buddies</b> (3/27)</div></div>
    <div class="bl-row" style="top:152px"><svg class="ic" style="left:5px;top:4px;width:9px;height:13px" viewBox="0 0 9 13"><path d="M1.5 1.5l6 5l-6 5z" fill="#fff" stroke="#000" stroke-width="1.3" stroke-linejoin="miter"/></svg><div class="t"><b>Techsense</b> (9/22)</div></div>
  </div>
  <!-- status combo -->
  <div class="abs" style="left:8px;top:392px;width:205px;height:32px;border:1px solid #6e675b;border-radius:3px;background:linear-gradient(#f8f7f5,#eae7e2)">
    <div class="abs" style="left:7px;top:7px;width:17px;height:17px;border-radius:50%;background:radial-gradient(circle at 35% 30%,#d6f0b4,#8cc85a 60%,#5f9c2e);border:1px solid #4a8a20"></div>
    <div class="abs gt" style="left:28px;top:6px;line-height:18px">Available</div>
    <div class="abs" style="left:176px;top:6px;width:1px;height:20px;background:#cfcac2;border-right:1px solid #fff"></div>
    <div class="abs" style="left:187px;top:12px;width:0;height:0;border-top:6px solid #000;border-left:5px solid transparent;border-right:5px solid transparent"></div>
  </div>
  <svg class="ic" style="left:219px;top:393px;width:30px;height:30px" viewBox="0 0 30 30">
 <defs><linearGradient id="gav" x1="0" y1="0" x2="0" y2="1"><stop offset="0" stop-color="#7aaee0"/><stop offset="0.65" stop-color="#c8e2f4"/><stop offset="0.8" stop-color="#4a7ec8"/><stop offset="1" stop-color="#f4f0c0"/></linearGradient>
 <linearGradient id="gav2" x1="0" y1="0" x2="1" y2="0"><stop offset="0" stop-color="#eee"/><stop offset="1" stop-color="#cfdbe8"/></linearGradient></defs>
 <rect x="0.7" y="0.7" width="28.6" height="28.6" rx="1.5" fill="#fff" stroke="#4a78b8" stroke-width="1.4"/>
 <rect x="2.5" y="2.5" width="25" height="19" fill="url(#gav)" stroke="#5a8ad0" stroke-width="0.8"/>
 <circle cx="22" cy="7.5" r="3.5" fill="#f2dc30" stroke="#c8a010" stroke-width="0.8"/>
 <path d="M5,21.5 C5,18 7,17 10,17 C13,17 15,18 15,21.5Z" fill="#fff" stroke="#777" stroke-width="0.5"/>
 <circle cx="10" cy="12" r="5" fill="#eaa860" stroke="#b87828" stroke-width="0.9"/>
 <ellipse cx="17" cy="16" rx="2" ry="1.5" fill="#e0a050" transform="rotate(-40 17 16)"/>
 <rect x="3" y="23" width="24" height="4.5" fill="url(#gav2)"/>
</svg>
</div>

<div id="botpanel">
  <div class="abs" style="left:1px;top:1px;width:22px;height:22px;border:1px solid #7b7464;border-radius:3px;background:linear-gradient(#fcfbfa,#e9e6e1)"><svg class="ic" style="left:2px;top:2px;width:16px;height:16px" viewBox="0 0 24 24"><use href="#i-desk"/></svg></div>
  <div class="abs handle" style="left:26px;top:2px;width:6px;height:21px"></div>
  <div class="tb" style="left:35px"><svg class="ic" viewBox="0 0 24 24"><use href="#i-ff"/></svg><div class="t">[How do you ...</div></div>
  <div class="tb act" style="left:174px"><svg class="ic" viewBox="0 0 24 24"><use href="#i-pidgin"/></svg><div class="t">Buddy List</div></div>
  <div class="tb" style="left:312px"><svg class="ic" viewBox="0 0 24 24"><use href="#i-grn"/></svg><div class="t">[areeothman...</div></div>
  <div class="tb" style="left:451px"><svg class="ic" viewBox="0 0 24 24"><use href="#i-term"/></svg><div class="t">[root@nb-na...</div></div>
  <div class="tb" style="left:590px"><svg class="ic" viewBox="0 0 24 24"><use href="#i-hawk"/></svg><div class="t">[HawkEYE]</div></div>
  <div class="tb" style="left:728px"><svg class="ic" viewBox="0 0 24 24"><use href="#i-fm"/></svg><div class="t">[HawkEYE - Fil...</div></div>
  <div class="tb" style="left:867px"><svg class="ic" viewBox="0 0 24 24"><use href="#i-gimp"/></svg><div class="t">[The GIMP]</div></div>
  <div class="tb" style="left:1005px"><svg class="ic" viewBox="0 0 24 24"><use href="#i-img"/></svg><div class="t">[*Untitled-1.0 ...</div></div>
  <div class="tb" style="left:1144px"><svg class="ic" viewBox="0 0 24 24"><use href="#i-img"/></svg><div class="t">[*Untitled-2.0 ...</div></div>
  <div class="abs" style="left:1285px;top:2px;width:32px;height:20px;background:#3a6896"></div>
  <div class="abs" style="left:1311px;top:3px;width:6px;height:9px;background:#9cc8f4;border:1px solid #fff"></div>
  <div class="abs" style="left:1318px;top:2px;width:32px;height:20px;background:#b0a694"></div>
  <div class="abs" style="left:1351px;top:2px;width:32px;height:20px;background:#b0a694"></div>
  <div class="abs" style="left:1384px;top:2px;width:32px;height:20px;background:#b0a694"></div>
  <svg class="ic" style="left:1420px;top:3px;width:19px;height:19px" viewBox="0 0 24 24"><use href="#i-trash"/></svg>
</div>

</body></html>
